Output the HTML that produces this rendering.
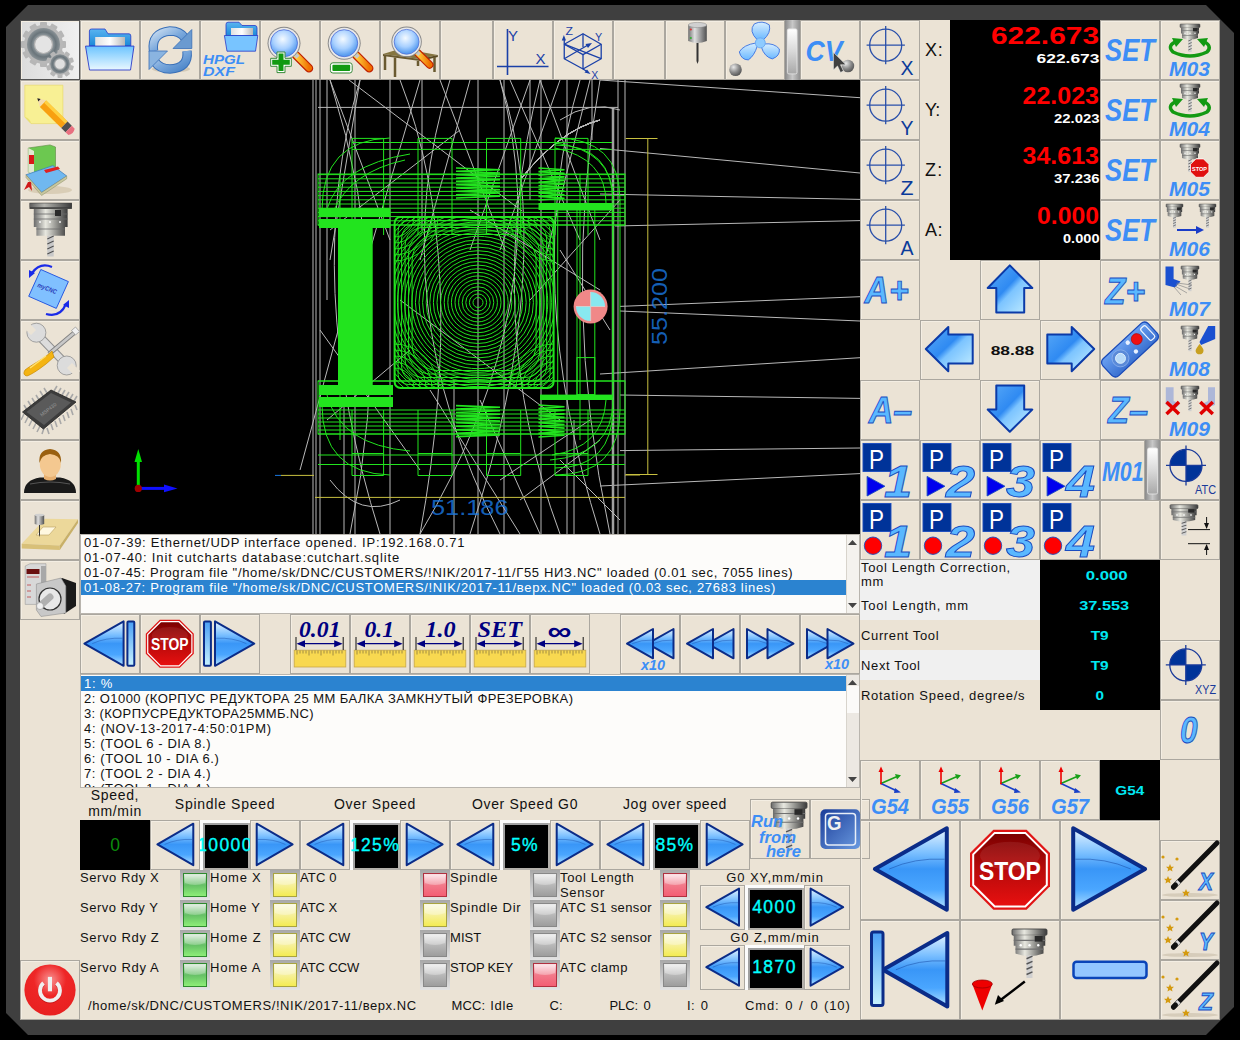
<!DOCTYPE html>
<html><head><meta charset="utf-8">
<style>
*{margin:0;padding:0;box-sizing:border-box}
html,body{width:1240px;height:1040px;overflow:hidden;background:#000}
body{position:relative;font-family:"Liberation Sans",sans-serif;color:#111}
.a{position:absolute}
#frame{left:6px;top:5px;width:1228px;height:1030px;background:#3f3f3f;
 clip-path:polygon(22px 0,1200px 0,1228px 28px,1228px 1002px,1200px 1030px,22px 1030px,0 1008px,0 22px)}
#win{left:20px;top:20px;width:1200px;height:1000px;background:#ebe3d5}
.b{position:absolute;border:1px solid #aba79f;box-shadow:inset 1px 1px 0 #f4eee3}
.blk{position:absolute;background:#000}
.lst{position:absolute;background:#fdfcfa;border:1px solid #b9b5ae;overflow:hidden}
.row{position:absolute;left:0;height:15px;font-size:13px;line-height:15px;white-space:nowrap;padding-left:3px}
.sel{background:#2b83d0;color:#fff}
.t{position:absolute;white-space:nowrap;font-size:13px;line-height:15px}
.ctr{text-align:center}
svg.ov{position:absolute;left:0;top:0}
.vbox{width:50px;height:50px;background:#000;box-shadow:inset 3px 3px 0 #fcfcfc,inset -2px -2px 0 #b4b0aa,inset 5px 5px 0 #a0a0a0;color:#00ffff;font-size:17.5px;-webkit-text-stroke:0.35px #00ffff;overflow:hidden;display:flex;align-items:center;justify-content:center}
.vbox2{width:59px;height:45px;background:#000;box-shadow:inset 3px 3px 0 #fcfcfc,inset -2px -2px 0 #b4b0aa,inset 5px 5px 0 #a0a0a0;color:#00ffff;font-size:17.5px;-webkit-text-stroke:0.35px #00ffff;overflow:hidden;display:flex;align-items:center;justify-content:center}
.dro{left:950px;width:149px;text-align:right;color:#ff0000;font-weight:bold;font-size:24px;line-height:26px}
.dro2{left:950px;width:149px;text-align:right;color:#fff;font-weight:bold;font-size:13px;line-height:14px}
.tv{left:1040px;width:120px;text-align:center;color:#00e5f0;font-weight:bold;font-size:13px;line-height:15px}
</style></head><body>
<div id="frame" class="a"></div>
<div id="win" class="a"></div>

<!-- top toolbar -->
<div class="b" style="left:20px;top:20px;width:60px;height:60px;background:linear-gradient(90deg,#dcdcdc,#f0f0f0);border-color:#555"></div>
<div class="b" style="left:80px;top:20px;width:60px;height:60px"></div>
<div class="b" style="left:140px;top:20px;width:60px;height:60px"></div>
<div class="b" style="left:200px;top:20px;width:60px;height:60px"></div>
<div class="b" style="left:260px;top:20px;width:60px;height:60px"></div>
<div class="b" style="left:320px;top:20px;width:60px;height:60px"></div>
<div class="b" style="left:380px;top:20px;width:60px;height:60px"></div>
<div class="b" style="left:440px;top:20px;width:53px;height:60px"></div>
<div class="b" style="left:493px;top:20px;width:60px;height:60px"></div>
<div class="b" style="left:553px;top:20px;width:60px;height:60px"></div>
<div class="b" style="left:613px;top:20px;width:52px;height:60px"></div>
<div class="b" style="left:665px;top:20px;width:60px;height:60px"></div>
<div class="b" style="left:725px;top:20px;width:60px;height:60px"></div>
<div class="b" style="left:800px;top:20px;width:60px;height:60px"></div>

<!-- left column -->
<div class="b" style="left:20px;top:80px;width:60px;height:60px"></div>
<div class="b" style="left:20px;top:140px;width:60px;height:60px"></div>
<div class="b" style="left:20px;top:200px;width:60px;height:60px"></div>
<div class="b" style="left:20px;top:260px;width:60px;height:60px"></div>
<div class="b" style="left:20px;top:320px;width:60px;height:60px"></div>
<div class="b" style="left:20px;top:380px;width:60px;height:60px"></div>
<div class="b" style="left:20px;top:440px;width:60px;height:60px"></div>
<div class="b" style="left:20px;top:500px;width:60px;height:60px"></div>
<div class="b" style="left:20px;top:560px;width:60px;height:60px"></div>
<div class="b" style="left:20px;top:960px;width:60px;height:60px"></div>

<!-- canvas -->
<div class="blk" style="left:80px;top:80px;width:780px;height:454px"></div>

<svg class="ov" style="left:80px;top:80px" width="780" height="454" viewBox="80 80 780 454"><path d="M600.0 80.0L860.0 97.7" stroke="#b8b8b8" stroke-width="1"></path>
<path d="M600.0 148.5L860.0 173.0" stroke="#b8b8b8" stroke-width="1"></path>
<path d="M600.0 194.0L860.0 199.4" stroke="#b8b8b8" stroke-width="1"></path>
<path d="M615.0 226.0L860.0 220.6" stroke="#b8b8b8" stroke-width="1"></path>
<path d="M620.0 306.4L860.0 296.7" stroke="#b8b8b8" stroke-width="1"></path>
<path d="M620.0 311.0L860.0 321.0" stroke="#b8b8b8" stroke-width="1"></path>
<path d="M600.0 374.0L860.0 357.7" stroke="#b8b8b8" stroke-width="1"></path>
<path d="M620.0 395.0L860.0 398.4" stroke="#b8b8b8" stroke-width="1"></path>
<path d="M620.0 450.6L860.0 448.0" stroke="#b8b8b8" stroke-width="1"></path>
<path d="M600.0 486.0L860.0 473.6" stroke="#b8b8b8" stroke-width="1"></path>
<path d="M313.0 80.0L313.0 534.0" stroke="#b8b8b8" stroke-width="1"></path>
<path d="M316.0 80.0L316.0 534.0" stroke="#b8b8b8" stroke-width="1"></path>
<path d="M320.0 80.0L320.0 534.0" stroke="#b8b8b8" stroke-width="1"></path>
<path d="M355.0 80.0L355.0 534.0" stroke="#b8b8b8" stroke-width="1"></path>
<path d="M390.0 80.0L390.0 534.0" stroke="#b8b8b8" stroke-width="1"></path>
<path d="M478.0 80.0L478.0 534.0" stroke="#b8b8b8" stroke-width="1"></path>
<path d="M504.0 80.0L504.0 534.0" stroke="#b8b8b8" stroke-width="1"></path>
<path d="M541.0 80.0L541.0 534.0" stroke="#b8b8b8" stroke-width="1"></path>
<path d="M567.0 80.0L567.0 534.0" stroke="#b8b8b8" stroke-width="1"></path>
<path d="M618.0 80.0L618.0 534.0" stroke="#b8b8b8" stroke-width="1"></path>
<path d="M625.0 80.0L625.0 534.0" stroke="#b8b8b8" stroke-width="1"></path>
<path d="M327.0 80.0L327.0 300.0" stroke="#b8b8b8" stroke-width="1"></path>
<path d="M344.0 400.0L344.0 534.0" stroke="#b8b8b8" stroke-width="1"></path>
<path d="M422.0 80.0L422.0 230.0" stroke="#b8b8b8" stroke-width="1"></path>
<path d="M454.0 380.0L454.0 534.0" stroke="#b8b8b8" stroke-width="1"></path>
<path d="M530.0 80.0L530.0 200.0" stroke="#b8b8b8" stroke-width="1"></path>
<path d="M574.0 420.0L574.0 534.0" stroke="#b8b8b8" stroke-width="1"></path>
<path d="M592.0 80.0L592.0 140.0" stroke="#b8b8b8" stroke-width="1"></path>
<path d="M318.0 107.4L618.0 107.4" stroke="#b8b8b8" stroke-width="1"></path>
<path d="M613.0 107.0L613.0 534.0" stroke="#a0a0a0" stroke-width="2.5"></path>
<path d="M349.0 80.0L522.0 211.0" stroke="#b8b8b8" stroke-width="1"></path>
<path d="M330.0 80.0L390.0 240.0" stroke="#b8b8b8" stroke-width="1"></path>
<path d="M360.0 80.0L330.0 260.0" stroke="#b8b8b8" stroke-width="1"></path>
<path d="M420.0 80.0L370.0 250.0" stroke="#b8b8b8" stroke-width="1"></path>
<path d="M440.0 80.0L505.0 250.0" stroke="#b8b8b8" stroke-width="1"></path>
<path d="M470.0 80.0L420.0 260.0" stroke="#b8b8b8" stroke-width="1"></path>
<path d="M530.0 80.0L470.0 250.0" stroke="#b8b8b8" stroke-width="1"></path>
<path d="M510.0 80.0L580.0 240.0" stroke="#b8b8b8" stroke-width="1"></path>
<path d="M560.0 80.0L500.0 250.0" stroke="#b8b8b8" stroke-width="1"></path>
<path d="M590.0 80.0L545.0 260.0" stroke="#b8b8b8" stroke-width="1"></path>
<path d="M540.0 80.0L600.0 240.0" stroke="#b8b8b8" stroke-width="1"></path>
<path d="M330.0 230.0L460.0 130.0" stroke="#b8b8b8" stroke-width="1"></path>
<path d="M360.0 250.0L300.0 470.0" stroke="#b8b8b8" stroke-width="1"></path>
<path d="M327.0 420.0L410.0 350.0" stroke="#b8b8b8" stroke-width="1"></path>
<path d="M400.0 300.0L560.0 420.0" stroke="#b8b8b8" stroke-width="1"></path>
<path d="M560.0 250.0L610.0 330.0" stroke="#b8b8b8" stroke-width="1"></path>
<path d="M470.0 210.0L600.0 290.0" stroke="#b8b8b8" stroke-width="1"></path>
<path d="M320.0 330.0L420.0 470.0" stroke="#b8b8b8" stroke-width="1"></path>
<path d="M430.0 390.0L520.0 534.0" stroke="#b8b8b8" stroke-width="1"></path>
<path d="M480.0 400.0L540.0 534.0" stroke="#b8b8b8" stroke-width="1"></path>
<path d="M500.0 480.0L590.0 420.0" stroke="#b8b8b8" stroke-width="1"></path>
<path d="M560.0 460.0L620.0 520.0" stroke="#b8b8b8" stroke-width="1"></path>
<path d="M600.0 440.0L520.0 500.0" stroke="#b8b8b8" stroke-width="1"></path>
<path d="M620.0 200.0L530.0 300.0" stroke="#b8b8b8" stroke-width="1"></path>
<path d="M560 120Q590 100 620 110" fill="none" stroke="#b8b8b8" stroke-width="1"></path>
<path d="M330 80 Q400 300 350 534" fill="none" stroke="#b8b8b8" stroke-width="1"></path>
<path d="M520 180Q560 130 600 120" fill="none" stroke="#b8b8b8" stroke-width="1"></path>
<path d="M360 80 Q300 280 380 534" fill="none" stroke="#b8b8b8" stroke-width="1"></path>
<path d="M520 180Q560 130 600 120" fill="none" stroke="#b8b8b8" stroke-width="1"></path>
<path d="M400 80 Q470 260 420 534" fill="none" stroke="#b8b8b8" stroke-width="1"></path>
<path d="M520 180Q560 130 600 120" fill="none" stroke="#b8b8b8" stroke-width="1"></path>
<path d="M450 80 Q380 300 500 534" fill="none" stroke="#b8b8b8" stroke-width="1"></path>
<path d="M520 180Q560 130 600 120" fill="none" stroke="#b8b8b8" stroke-width="1"></path>
<path d="M500 80 Q560 260 470 534" fill="none" stroke="#b8b8b8" stroke-width="1"></path>
<path d="M520 180Q560 130 600 120" fill="none" stroke="#b8b8b8" stroke-width="1"></path>
<path d="M540 80 Q480 320 560 534" fill="none" stroke="#b8b8b8" stroke-width="1"></path>
<path d="M520 180Q560 130 600 120" fill="none" stroke="#b8b8b8" stroke-width="1"></path>
<path d="M580 80 Q520 280 600 534" fill="none" stroke="#b8b8b8" stroke-width="1"></path>
<path d="M520 180Q560 130 600 120" fill="none" stroke="#b8b8b8" stroke-width="1"></path>
<path d="M600 80 Q560 300 610 534" fill="none" stroke="#b8b8b8" stroke-width="1"></path>
<path d="M520 180Q560 130 600 120" fill="none" stroke="#b8b8b8" stroke-width="1"></path>
<path d="M420 534 Q560 300 500 80" fill="none" stroke="#b8b8b8" stroke-width="1"></path>
<path d="M520 180Q560 130 600 120" fill="none" stroke="#b8b8b8" stroke-width="1"></path>
<path d="M330 480Q360 520 400 500" fill="none" stroke="#b8b8b8" stroke-width="1"></path>
<path d="M352.0 142.5L612.0 142.5" stroke="#22e41e" stroke-width="1"></path>
<path d="M352.0 149.4L612.0 149.4" stroke="#22e41e" stroke-width="1"></path>
<path d="M318.0 174.6L625.0 174.6" stroke="#22e41e" stroke-width="1"></path>
<path d="M318.0 178.8L625.0 178.8" stroke="#22e41e" stroke-width="1"></path>
<path d="M318.0 183.0L625.0 183.0" stroke="#22e41e" stroke-width="1"></path>
<path d="M318.0 187.2L625.0 187.2" stroke="#22e41e" stroke-width="1"></path>
<path d="M318.0 191.4L625.0 191.4" stroke="#22e41e" stroke-width="1"></path>
<path d="M318.0 195.6L625.0 195.6" stroke="#22e41e" stroke-width="1"></path>
<path d="M318.0 199.8L625.0 199.8" stroke="#22e41e" stroke-width="1"></path>
<path d="M318.0 204.0L625.0 204.0" stroke="#22e41e" stroke-width="1"></path>
<path d="M318.0 208.2L625.0 208.2" stroke="#22e41e" stroke-width="1"></path>
<path d="M318.0 212.4L625.0 212.4" stroke="#22e41e" stroke-width="1"></path>
<path d="M318.0 216.6L625.0 216.6" stroke="#22e41e" stroke-width="1"></path>
<path d="M318.0 220.8L625.0 220.8" stroke="#22e41e" stroke-width="1"></path>
<path d="M318.0 225.0L625.0 225.0" stroke="#22e41e" stroke-width="1"></path>
<path d="M318.0 381.0L625.0 381.0" stroke="#22e41e" stroke-width="1"></path>
<path d="M318.0 410.0L625.0 410.0" stroke="#22e41e" stroke-width="1"></path>
<path d="M318.0 414.0L625.0 414.0" stroke="#22e41e" stroke-width="1"></path>
<path d="M318.0 418.0L625.0 418.0" stroke="#22e41e" stroke-width="1"></path>
<path d="M318.0 422.0L625.0 422.0" stroke="#22e41e" stroke-width="1"></path>
<path d="M318.0 426.0L625.0 426.0" stroke="#22e41e" stroke-width="1"></path>
<path d="M318.0 430.0L625.0 430.0" stroke="#22e41e" stroke-width="1"></path>
<path d="M318.0 434.0L625.0 434.0" stroke="#22e41e" stroke-width="1"></path>
<path d="M318.0 455.0L625.0 455.0" stroke="#22e41e" stroke-width="1"></path>
<path d="M318.0 464.5L625.0 464.5" stroke="#22e41e" stroke-width="1"></path>
<path d="M352.0 138.4L352.0 235.0" stroke="#22e41e" stroke-width="1"></path>
<path d="M352.0 410.0L352.0 475.5" stroke="#22e41e" stroke-width="1"></path>
<path d="M383.6 138.4L383.6 235.0" stroke="#22e41e" stroke-width="1"></path>
<path d="M383.6 410.0L383.6 475.5" stroke="#22e41e" stroke-width="1"></path>
<path d="M418.0 138.4L418.0 235.0" stroke="#22e41e" stroke-width="1"></path>
<path d="M418.0 410.0L418.0 475.5" stroke="#22e41e" stroke-width="1"></path>
<path d="M452.0 138.4L452.0 235.0" stroke="#22e41e" stroke-width="1"></path>
<path d="M452.0 410.0L452.0 475.5" stroke="#22e41e" stroke-width="1"></path>
<path d="M486.5 138.4L486.5 235.0" stroke="#22e41e" stroke-width="1"></path>
<path d="M486.5 410.0L486.5 475.5" stroke="#22e41e" stroke-width="1"></path>
<path d="M520.7 138.4L520.7 235.0" stroke="#22e41e" stroke-width="1"></path>
<path d="M520.7 410.0L520.7 475.5" stroke="#22e41e" stroke-width="1"></path>
<path d="M555.0 138.4L555.0 235.0" stroke="#22e41e" stroke-width="1"></path>
<path d="M555.0 410.0L555.0 475.5" stroke="#22e41e" stroke-width="1"></path>
<path d="M588.0 138.4L588.0 235.0" stroke="#22e41e" stroke-width="1"></path>
<path d="M588.0 410.0L588.0 475.5" stroke="#22e41e" stroke-width="1"></path>
<path d="M352.0 138.4L383.6 138.4" stroke="#22e41e" stroke-width="1"></path>
<path d="M352.0 475.5L383.6 475.5" stroke="#22e41e" stroke-width="1"></path>
<path d="M352.0 453.5L383.6 453.5" stroke="#22e41e" stroke-width="1"></path>
<path d="M418.0 138.4L452.0 138.4" stroke="#22e41e" stroke-width="1"></path>
<path d="M418.0 475.5L452.0 475.5" stroke="#22e41e" stroke-width="1"></path>
<path d="M418.0 453.5L452.0 453.5" stroke="#22e41e" stroke-width="1"></path>
<path d="M486.5 138.4L520.7 138.4" stroke="#22e41e" stroke-width="1"></path>
<path d="M486.5 475.5L520.7 475.5" stroke="#22e41e" stroke-width="1"></path>
<path d="M486.5 453.5L520.7 453.5" stroke="#22e41e" stroke-width="1"></path>
<path d="M555.0 138.4L588.0 138.4" stroke="#22e41e" stroke-width="1"></path>
<path d="M555.0 475.5L588.0 475.5" stroke="#22e41e" stroke-width="1"></path>
<path d="M555.0 453.5L588.0 453.5" stroke="#22e41e" stroke-width="1"></path>
<rect x="318.0" y="174.0" width="307.0" height="51.0" rx="0.0" fill="none" stroke="#22e41e" stroke-width="1"></rect>
<rect x="318.0" y="381.0" width="307.0" height="53.0" rx="0.0" fill="none" stroke="#22e41e" stroke-width="1"></rect>
<path d="M340.0 174.0L340.0 440.0" stroke="#22e41e" stroke-width="1"></path>
<path d="M580.0 174.0L580.0 440.0" stroke="#22e41e" stroke-width="1"></path>
<path d="M327 209Q340 165 410 154" fill="none" stroke="#22e41e" stroke-width="1"></path>
<path d="M333 212Q350 172 405 160" fill="none" stroke="#22e41e" stroke-width="1"></path>
<path d="M555 143Q613 150 613 200" fill="none" stroke="#22e41e" stroke-width="1"></path>
<path d="M555 148Q606 158 606 203" fill="none" stroke="#22e41e" stroke-width="1"></path>
<path d="M327 395Q340 445 410 451" fill="none" stroke="#22e41e" stroke-width="1"></path>
<path d="M613 400Q613 455 550 460" fill="none" stroke="#22e41e" stroke-width="1"></path>
<path d="M606 400Q603 448 552 455" fill="none" stroke="#22e41e" stroke-width="1"></path>
<path d="M555 138Q620 138 620 200V410Q620 475 555 475" fill="none" stroke="#22e41e" stroke-width="1"></path>
<path d="M555 145Q613 145 613 203V407Q613 468 555 468" fill="none" stroke="#22e41e" stroke-width="1"></path>
<path d="M390 138Q322 140 322 210" fill="none" stroke="#22e41e" stroke-width="1"></path>
<path d="M390 475Q322 473 322 405" fill="none" stroke="#22e41e" stroke-width="1"></path>
<rect x="319.0" y="208.0" width="71.5" height="9.0" fill="#22e41e"></rect>
<rect x="319.0" y="219.0" width="71.5" height="9.0" fill="#22e41e"></rect>
<rect x="338.0" y="228.0" width="34.7" height="157.0" fill="#22e41e"></rect>
<rect x="319.0" y="385.0" width="74.0" height="10.0" fill="#22e41e"></rect>
<rect x="319.0" y="397.0" width="74.0" height="10.0" fill="#22e41e"></rect>
<rect x="538.5" y="203.0" width="74.0" height="7.0" fill="#22e41e"></rect>
<rect x="540.0" y="394.6" width="72.6" height="5.4" fill="#22e41e"></rect>
<rect x="557.7" y="210.0" width="55.0" height="187.0" rx="0.0" fill="none" stroke="#22e41e" stroke-width="1"></rect>
<path d="M577.0 210.0L577.0 395.0" stroke="#22e41e" stroke-width="1"></path>
<path d="M594.8 210.0L594.8 395.0" stroke="#22e41e" stroke-width="1"></path>
<rect x="577.0" y="357.6" width="17.8" height="37.0" rx="0.0" fill="none" stroke="#22e41e" stroke-width="1"></rect>
<path d="M456.0 168.0 L500.0 169.7 L456.0 171.3 L500.0 173.0 L456.0 174.7 L500.0 176.3 L456.0 178.0 L500.0 179.7 L456.0 181.3 L500.0 183.0 L456.0 184.7 L500.0 186.3 L456.0 188.0 L500.0 189.7 L456.0 191.3 L500.0 193.0 L456.0 194.7 L500.0 196.3 L456.0 198.0" fill="none" stroke="#22e41e" stroke-width="1.6"></path>
<path d="M538.5 168.0 L564.5 169.8 L538.5 171.6 L564.5 173.3 L538.5 175.1 L564.5 176.9 L538.5 178.7 L564.5 180.4 L538.5 182.2 L564.5 184.0 L538.5 185.8 L564.5 187.6 L538.5 189.3 L564.5 191.1 L538.5 192.9 L564.5 194.7 L538.5 196.4 L564.5 198.2 L538.5 200.0" fill="none" stroke="#22e41e" stroke-width="1.6"></path>
<path d="M456.0 405.6 L500.0 407.3 L456.0 409.0 L500.0 410.8 L456.0 412.5 L500.0 414.2 L456.0 415.9 L500.0 417.7 L456.0 419.4 L500.0 421.1 L456.0 422.8 L500.0 424.5 L456.0 426.3 L500.0 428.0 L456.0 429.7 L500.0 431.4 L456.0 433.2 L500.0 434.9 L456.0 436.6" fill="none" stroke="#22e41e" stroke-width="1.6"></path>
<path d="M538.5 405.0 L564.5 406.8 L538.5 408.6 L564.5 410.3 L538.5 412.1 L564.5 413.9 L538.5 415.7 L564.5 417.4 L538.5 419.2 L564.5 421.0 L538.5 422.8 L564.5 424.6 L538.5 426.3 L564.5 428.1 L538.5 429.9 L564.5 431.7 L538.5 433.4 L564.5 435.2 L538.5 437.0" fill="none" stroke="#22e41e" stroke-width="1.6"></path>
<clipPath id="csq"><rect x="394.6" y="217" width="159" height="171" rx="6"></rect></clipPath><g clip-path="url(#csq)">
<circle cx="478" cy="302.5" r="5.0" fill="none" stroke="#22e41e" stroke-width="1"></circle>
<circle cx="478" cy="302.5" r="8.6" fill="none" stroke="#22e41e" stroke-width="1"></circle>
<circle cx="478" cy="302.5" r="12.2" fill="none" stroke="#22e41e" stroke-width="1"></circle>
<circle cx="478" cy="302.5" r="15.8" fill="none" stroke="#22e41e" stroke-width="1"></circle>
<circle cx="478" cy="302.5" r="19.4" fill="none" stroke="#22e41e" stroke-width="1"></circle>
<circle cx="478" cy="302.5" r="23.0" fill="none" stroke="#22e41e" stroke-width="1"></circle>
<circle cx="478" cy="302.5" r="26.6" fill="none" stroke="#22e41e" stroke-width="1"></circle>
<circle cx="478" cy="302.5" r="30.2" fill="none" stroke="#22e41e" stroke-width="1"></circle>
<circle cx="478" cy="302.5" r="33.8" fill="none" stroke="#22e41e" stroke-width="1"></circle>
<circle cx="478" cy="302.5" r="37.4" fill="none" stroke="#22e41e" stroke-width="1"></circle>
<circle cx="478" cy="302.5" r="41.0" fill="none" stroke="#22e41e" stroke-width="1"></circle>
<circle cx="478" cy="302.5" r="44.6" fill="none" stroke="#22e41e" stroke-width="1"></circle>
<circle cx="478" cy="302.5" r="48.2" fill="none" stroke="#22e41e" stroke-width="1"></circle>
<circle cx="478" cy="302.5" r="51.8" fill="none" stroke="#22e41e" stroke-width="1"></circle>
<circle cx="478" cy="302.5" r="55.4" fill="none" stroke="#22e41e" stroke-width="1"></circle>
<circle cx="478" cy="302.5" r="59.0" fill="none" stroke="#22e41e" stroke-width="1"></circle>
<circle cx="478" cy="302.5" r="62.6" fill="none" stroke="#22e41e" stroke-width="1"></circle>
<circle cx="478" cy="302.5" r="66.2" fill="none" stroke="#22e41e" stroke-width="1"></circle>
<circle cx="478" cy="302.5" r="69.8" fill="none" stroke="#22e41e" stroke-width="1"></circle>
<circle cx="478" cy="302.5" r="73.4" fill="none" stroke="#22e41e" stroke-width="1"></circle>
<circle cx="478" cy="302.5" r="77.0" fill="none" stroke="#22e41e" stroke-width="1"></circle>
<circle cx="478" cy="302.5" r="80.6" fill="none" stroke="#22e41e" stroke-width="1"></circle>
<circle cx="478" cy="302.5" r="84.2" fill="none" stroke="#22e41e" stroke-width="1"></circle>
<circle cx="478" cy="302.5" r="87.8" fill="none" stroke="#22e41e" stroke-width="1"></circle>
<circle cx="478" cy="302.5" r="91.4" fill="none" stroke="#22e41e" stroke-width="1"></circle>
<circle cx="478" cy="302.5" r="95.0" fill="none" stroke="#22e41e" stroke-width="1"></circle>
<circle cx="478" cy="302.5" r="98.6" fill="none" stroke="#22e41e" stroke-width="1"></circle>
<circle cx="478" cy="302.5" r="102.2" fill="none" stroke="#22e41e" stroke-width="1"></circle>
<circle cx="478" cy="302.5" r="105.8" fill="none" stroke="#22e41e" stroke-width="1"></circle>
<circle cx="478" cy="302.5" r="109.4" fill="none" stroke="#22e41e" stroke-width="1"></circle>
<circle cx="478" cy="302.5" r="113.0" fill="none" stroke="#22e41e" stroke-width="1"></circle>
<circle cx="478" cy="302.5" r="116.6" fill="none" stroke="#22e41e" stroke-width="1"></circle>
<rect x="394.6" y="217.0" width="159.0" height="171.0" rx="6.0" fill="none" stroke="#22e41e" stroke-width="1"></rect>
<rect x="398.1" y="220.5" width="152.0" height="164.0" rx="10.0" fill="none" stroke="#22e41e" stroke-width="1"></rect>
<rect x="401.6" y="224.0" width="145.0" height="157.0" rx="14.0" fill="none" stroke="#22e41e" stroke-width="1"></rect>
<rect x="405.1" y="227.5" width="138.0" height="150.0" rx="18.0" fill="none" stroke="#22e41e" stroke-width="1"></rect>
<rect x="408.6" y="231.0" width="131.0" height="143.0" rx="22.0" fill="none" stroke="#22e41e" stroke-width="1"></rect>
<rect x="412.1" y="234.5" width="124.0" height="136.0" rx="26.0" fill="none" stroke="#22e41e" stroke-width="1"></rect>
<circle cx="394" cy="217" r="20" fill="none" stroke="#22e41e" stroke-width="0.9"></circle>
<circle cx="394" cy="217" r="26" fill="none" stroke="#22e41e" stroke-width="0.9"></circle>
<circle cx="394" cy="217" r="32" fill="none" stroke="#22e41e" stroke-width="0.9"></circle>
<circle cx="394" cy="217" r="38" fill="none" stroke="#22e41e" stroke-width="0.9"></circle>
<circle cx="394" cy="217" r="44" fill="none" stroke="#22e41e" stroke-width="0.9"></circle>
<circle cx="554" cy="217" r="20" fill="none" stroke="#22e41e" stroke-width="0.9"></circle>
<circle cx="554" cy="217" r="26" fill="none" stroke="#22e41e" stroke-width="0.9"></circle>
<circle cx="554" cy="217" r="32" fill="none" stroke="#22e41e" stroke-width="0.9"></circle>
<circle cx="554" cy="217" r="38" fill="none" stroke="#22e41e" stroke-width="0.9"></circle>
<circle cx="554" cy="217" r="44" fill="none" stroke="#22e41e" stroke-width="0.9"></circle>
<circle cx="394" cy="388" r="20" fill="none" stroke="#22e41e" stroke-width="0.9"></circle>
<circle cx="394" cy="388" r="26" fill="none" stroke="#22e41e" stroke-width="0.9"></circle>
<circle cx="394" cy="388" r="32" fill="none" stroke="#22e41e" stroke-width="0.9"></circle>
<circle cx="394" cy="388" r="38" fill="none" stroke="#22e41e" stroke-width="0.9"></circle>
<circle cx="394" cy="388" r="44" fill="none" stroke="#22e41e" stroke-width="0.9"></circle>
<circle cx="554" cy="388" r="20" fill="none" stroke="#22e41e" stroke-width="0.9"></circle>
<circle cx="554" cy="388" r="26" fill="none" stroke="#22e41e" stroke-width="0.9"></circle>
<circle cx="554" cy="388" r="32" fill="none" stroke="#22e41e" stroke-width="0.9"></circle>
<circle cx="554" cy="388" r="38" fill="none" stroke="#22e41e" stroke-width="0.9"></circle>
<circle cx="554" cy="388" r="44" fill="none" stroke="#22e41e" stroke-width="0.9"></circle>
</g>
<rect x="394.6" y="217.0" width="159.0" height="171.0" rx="6.0" fill="none" stroke="#22e41e" stroke-width="2"></rect>
<path d="M625.7 138.5L657.5 138.5" stroke="#c8c040" stroke-width="1"></path>
<path d="M625.7 474.5L657.5 474.5" stroke="#c8c040" stroke-width="1"></path>
<path d="M647.8 138.5L647.8 474.5" stroke="#c8c040" stroke-width="1"></path>
<path d="M315.0 497.4L625.0 497.4" stroke="#c8c040" stroke-width="1"></path>
<path d="M281.0 475.4L314.0 475.4" stroke="#c8c040" stroke-width="1"></path>
<path d="M275.0 475.4L281.0 475.4" stroke="#1a78e0" stroke-width="1"></path>
<path d="M625.0 475.0L640.0 475.0" stroke="#c8c040" stroke-width="1"></path>
<text x="431" y="515.2" font-family="Liberation Sans" font-size="22" fill="#1a7ae6" fill-opacity="0.8" textLength="77.5" lengthAdjust="spacingAndGlyphs">51.186</text>
<text transform="translate(666.5,345) rotate(-90)" x="0" y="0" font-family="Liberation Sans" font-size="22" fill="#1a7ae6" fill-opacity="0.8" textLength="77" lengthAdjust="spacingAndGlyphs">55.200</text>
<circle cx="590.6" cy="306.5" r="17" fill="#f08888"></circle>
<path d="M590.6 306.5V292A14.5 14.5 0 0 1 605 306.5Z M590.6 306.5H576A14.5 14.5 0 0 0 590.6 321Z" fill="#88e8f0"></path>
<path d="M576 306.5H605M590.6 292V321" stroke="#d0d0d0" stroke-width="1"></path>
<path d="M138.3 488.4V458" stroke="#00e000" stroke-width="3"></path><path d="M138.3 449L134.5 462H142Z" fill="#00e000"></path>
<path d="M138.3 488.4H168" stroke="#1010ff" stroke-width="3"></path><path d="M177.5 488.4L164 484.5V492.3Z" fill="#1010ff"></path>
<circle cx="138.3" cy="488.4" r="3.6" fill="#a00000"></circle></svg>
<!-- log -->
<div class="lst" style="left:80px;top:534px;width:780px;height:80px">
 <div class="row" style="top: 0px; letter-spacing: 0.76px;">01-07-39: Ethernet/UDP interface opened. IP:192.168.0.71</div>
 <div class="row" style="top: 15px; letter-spacing: 0.86px;">01-07-40: Init cutcharts database:cutchart.sqlite</div>
 <div class="row" style="top: 30px; letter-spacing: 0.68px;">01-07-45: Program file "/home/sk/DNC/CUSTOMERS/!NIK/2017-11/Г55 НИЗ.NC" loaded (0.01 sec, 7055 lines)</div>
 <div class="row sel" style="top: 45px; width: 765px; letter-spacing: 0.69px;">01-08-27: Program file "/home/sk/DNC/CUSTOMERS/!NIK/2017-11/верх.NC" loaded (0.03 sec, 27683 lines)</div>
</div>

<!-- transport row -->
<div class="b" style="left:80px;top:614px;width:60px;height:60px"></div>
<div class="b" style="left:140px;top:614px;width:60px;height:60px"></div>
<div class="b" style="left:200px;top:614px;width:60px;height:60px"></div>
<div class="b" style="left:290px;top:614px;width:60px;height:60px"></div>
<div class="b" style="left:350px;top:614px;width:60px;height:60px"></div>
<div class="b" style="left:410px;top:614px;width:60px;height:60px"></div>
<div class="b" style="left:470px;top:614px;width:60px;height:60px"></div>
<div class="b" style="left:530px;top:614px;width:60px;height:60px"></div>
<div class="b" style="left:620px;top:614px;width:60px;height:60px"></div>
<div class="b" style="left:680px;top:614px;width:60px;height:60px"></div>
<div class="b" style="left:740px;top:614px;width:60px;height:60px"></div>
<div class="b" style="left:800px;top:614px;width:60px;height:60px"></div>

<!-- gcode list -->
<div class="lst" style="left:80px;top:674px;width:780px;height:114px">
 <div class="row sel" style="top: 1px; width: 765px; letter-spacing: 0.78px;">1: %</div>
 <div class="row" style="top: 16px; letter-spacing: 0.44px;">2: O1000 (КОРПУС РЕДУКТОРА 25 ММ БАЛКА ЗАМКНУТЫЙ ФРЕЗЕРОВКА)</div>
 <div class="row" style="top: 31px; letter-spacing: 0.38px;">3: (КОРПУСРЕДУКТОРА25ММБ.NC)</div>
 <div class="row" style="top: 46px; letter-spacing: 0.69px;">4: (NOV-13-2017-4:50:01PM)</div>
 <div class="row" style="top: 61px; letter-spacing: 0.58px;">5: (TOOL 6 - DIA 8.)</div>
 <div class="row" style="top: 76px; letter-spacing: 0.6px;">6: (TOOL 10 - DIA 6.)</div>
 <div class="row" style="top: 91px; letter-spacing: 0.58px;">7: (TOOL 2 - DIA 4.)</div>
 <div class="row" style="top: 106px; letter-spacing: 0.58px;">8: (TOOL 1 - DIA 4.)</div>
</div>


<!-- speed labels -->
<div class="t ctr" style="left: 80px; top: 788px; width: 70px; line-height: 15.5px; font-size: 14px; letter-spacing: 0.66px;">Speed,<br>mm/min</div>
<div class="t ctr" style="left: 150px; top: 796px; width: 150px; font-size: 14px; line-height: 16px; letter-spacing: 0.71px;">Spindle Speed</div>
<div class="t ctr" style="left: 300px; top: 796px; width: 150px; font-size: 14px; line-height: 16px; letter-spacing: 0.73px;">Over Speed</div>
<div class="t ctr" style="left: 450px; top: 796px; width: 150px; font-size: 14px; line-height: 16px; letter-spacing: 0.69px;">Over Speed G0</div>
<div class="t ctr" style="left: 600px; top: 796px; width: 150px; font-size: 14px; line-height: 16px; letter-spacing: 0.59px;">Jog over speed</div>
<div class="blk" style="left:80px;top:820px;width:70px;height:50px"></div>
<div class="t ctr" style="left:80px;top:834px;width:70px;font-size:17.5px;line-height:22px;color:#0c8c0c">0</div>

<div class="b" style="left:150px;top:820px;width:50px;height:50px"></div>
<div class="b" style="left:250px;top:820px;width:50px;height:50px"></div>
<div class="b" style="left:300px;top:820px;width:50px;height:50px"></div>
<div class="b" style="left:400px;top:820px;width:50px;height:50px"></div>
<div class="b" style="left:450px;top:820px;width:50px;height:50px"></div>
<div class="b" style="left:550px;top:820px;width:50px;height:50px"></div>
<div class="b" style="left:600px;top:820px;width:50px;height:50px"></div>
<div class="b" style="left:700px;top:820px;width:50px;height:50px"></div>
<div class="vbox a" style="left:200px;top:820px"><span style="letter-spacing: 1.4px;">10000</span></div>
<div class="vbox a" style="left:350px;top:820px"><span style="letter-spacing: 1.32px;">125%</span></div>
<div class="vbox a" style="left:500px;top:820px"><span style="letter-spacing: 1.23px;">5%</span></div>
<div class="vbox a" style="left:650px;top:820px"><span style="letter-spacing: 1.29px;">85%</span></div>
<div class="b" style="left:750px;top:799px;width:60px;height:60px"></div>
<div class="b" style="left:810px;top:799px;width:60px;height:60px"></div>

<!-- LEDs labels -->
<div class="t" style="left: 80px; top: 870px; letter-spacing: 0.58px;">Servo Rdy X</div>
<div class="t" style="left: 80px; top: 900px; letter-spacing: 0.52px;">Servo Rdy Y</div>
<div class="t" style="left: 80px; top: 930px; letter-spacing: 0.65px;">Servo Rdy Z</div>
<div class="t" style="left: 80px; top: 960px; letter-spacing: 0.65px;">Servo Rdy A</div>
<div class="t" style="left: 210px; top: 870px; letter-spacing: 0.74px;">Home X</div>
<div class="t" style="left: 210px; top: 900px; letter-spacing: 0.62px;">Home Y</div>
<div class="t" style="left: 210px; top: 930px; letter-spacing: 0.87px;">Home Z</div>
<div class="t" style="left: 210px; top: 960px; letter-spacing: 0.86px;">Home A</div>
<div class="t" style="left: 300px; top: 870px; letter-spacing: 0.13px;">ATC 0</div>
<div class="t" style="left: 300px; top: 900px; letter-spacing: -0.03px;">ATC X</div>
<div class="t" style="left: 300px; top: 930px; letter-spacing: -0.02px;">ATC CW</div>
<div class="t" style="left: 300px; top: 960px; letter-spacing: -0.06px;">ATC CCW</div>
<div class="t" style="left: 450px; top: 870px; letter-spacing: 0.69px;">Spindle</div>
<div class="t" style="left: 450px; top: 900px; letter-spacing: 0.7px;">Spindle Dir</div>
<div class="t" style="left: 450px; top: 930px; letter-spacing: 0.05px;">MIST</div>
<div class="t" style="left: 450px; top: 960px; letter-spacing: -0.19px;">STOP KEY</div>
<div class="t" style="left: 560px; top: 870px; letter-spacing: 0.64px;">Tool Length<br>Sensor</div>
<div class="t" style="left: 560px; top: 900px; letter-spacing: 0.37px;">ATC S1 sensor</div>
<div class="t" style="left: 560px; top: 930px; letter-spacing: 0.37px;">ATC S2 sensor</div>
<div class="t" style="left: 560px; top: 960px; letter-spacing: 0.51px;">ATC clamp</div>

<div class="t ctr" style="left: 700px; top: 870px; width: 150px; letter-spacing: 0.94px;">G0 XY,mm/min</div>
<div class="t ctr" style="left: 700px; top: 930px; width: 150px; letter-spacing: 1px;">G0 Z,mm/min</div>
<div class="b" style="left:700px;top:885px;width:45px;height:45px"></div>
<div class="b" style="left:804px;top:885px;width:46px;height:45px"></div>
<div class="b" style="left:700px;top:945px;width:45px;height:45px"></div>
<div class="b" style="left:804px;top:945px;width:46px;height:45px"></div>
<div class="vbox2 a" style="left:745px;top:885px"><span style="letter-spacing: 1.4px;">4000</span></div>
<div class="vbox2 a" style="left:745px;top:945px"><span style="letter-spacing: 1.4px;">1870</span></div>

<!-- status bar -->
<div class="t" style="left: 88px; top: 998px; letter-spacing: 0.58px;">/home/sk/DNC/CUSTOMERS/!NIK/2017-11/верх.NC</div>
<div class="t" style="left: 451.5px; top: 998px; letter-spacing: 0.14px;">MCC:</div>
<div class="t" style="left: 490.2px; top: 998px; letter-spacing: 0.68px;">Idle</div>
<div class="t" style="left: 549.5px; top: 998px; letter-spacing: 0.23px;">C:</div>
<div class="t" style="left: 609.5px; top: 998px; letter-spacing: -0.09px;">PLC:</div>
<div class="t" style="left:643.4px;top:998px">0</div>
<div class="t" style="left: 686.9px; top: 998px; letter-spacing: 0.49px;">I:</div>
<div class="t" style="left:700.8px;top:998px">0</div>
<div class="t" style="left: 745px; top: 998px; letter-spacing: 0.83px;">Cmd:</div>
<div class="t" style="left:785.2px;top:998px">0</div>
<div class="t" style="left:798.9px;top:998px">/</div>
<div class="t" style="left:810.5px;top:998px">0</div>
<div class="t" style="left: 824px; top: 998px; letter-spacing: 0.89px;">(10)</div>

<!-- right panel: DRO -->
<div class="b" style="left:860px;top:20px;width:60px;height:60px"></div>
<div class="b" style="left:860px;top:80px;width:60px;height:60px"></div>
<div class="b" style="left:860px;top:140px;width:60px;height:60px"></div>
<div class="b" style="left:860px;top:200px;width:60px;height:60px"></div>
<div class="t" style="left: 925px; top: 40px; font-size: 18px; line-height: 20px; letter-spacing: 0.7px;">X:</div>
<div class="t" style="left: 925px; top: 100px; font-size: 18px; line-height: 20px; letter-spacing: -0.67px;">Y:</div>
<div class="t" style="left: 925px; top: 160px; font-size: 18px; line-height: 20px; letter-spacing: 1.2px;">Z:</div>
<div class="t" style="left: 925px; top: 220px; font-size: 18px; line-height: 20px; letter-spacing: 0.52px;">A:</div>
<div class="blk" style="left:950px;top:20px;width:150px;height:240px"></div>
<div class="b" style="left:1100px;top:20px;width:60px;height:60px"></div>
<div class="b" style="left:1100px;top:80px;width:60px;height:60px"></div>
<div class="b" style="left:1100px;top:140px;width:60px;height:60px"></div>
<div class="b" style="left:1100px;top:200px;width:60px;height:60px"></div>
<div class="b" style="left:1160px;top:20px;width:60px;height:60px"></div>
<div class="b" style="left:1160px;top:80px;width:60px;height:60px"></div>
<div class="b" style="left:1160px;top:140px;width:60px;height:60px"></div>
<div class="b" style="left:1160px;top:200px;width:60px;height:60px"></div>
<div class="b" style="left:1160px;top:260px;width:60px;height:60px"></div>
<div class="b" style="left:1160px;top:320px;width:60px;height:60px"></div>
<div class="b" style="left:1160px;top:380px;width:60px;height:60px"></div>
<!-- jog grid -->
<div class="b" style="left:860px;top:260px;width:60px;height:60px"></div>
<div class="b" style="left:980px;top:260px;width:60px;height:60px"></div>
<div class="b" style="left:1100px;top:260px;width:60px;height:60px"></div>
<div class="b" style="left:920px;top:320px;width:60px;height:60px"></div>
<div class="b" style="left:1040px;top:320px;width:60px;height:60px"></div>
<div class="b" style="left:1100px;top:320px;width:60px;height:60px"></div>
<div class="b" style="left:860px;top:380px;width:60px;height:60px"></div>
<div class="b" style="left:980px;top:380px;width:60px;height:60px"></div>
<div class="b" style="left:1100px;top:380px;width:60px;height:60px"></div>
<!-- P rows -->
<div class="b" style="left:860px;top:440px;width:60px;height:60px"></div>
<div class="b" style="left:920px;top:440px;width:60px;height:60px"></div>
<div class="b" style="left:980px;top:440px;width:60px;height:60px"></div>
<div class="b" style="left:1040px;top:440px;width:60px;height:60px"></div>
<div class="b" style="left:1100px;top:440px;width:45px;height:60px"></div>
<div class="b" style="left:1160px;top:440px;width:60px;height:60px"></div>
<div class="b" style="left:860px;top:500px;width:60px;height:60px"></div>
<div class="b" style="left:920px;top:500px;width:60px;height:60px"></div>
<div class="b" style="left:980px;top:500px;width:60px;height:60px"></div>
<div class="b" style="left:1040px;top:500px;width:60px;height:60px"></div>
<div class="b" style="left:1100px;top:500px;width:60px;height:60px"></div>
<div class="b" style="left:1160px;top:500px;width:60px;height:60px"></div>
<!-- tool table -->
<div class="a" style="left:860px;top:560px;width:180px;height:60px;background:#f0f0f0"></div>
<div class="a" style="left:860px;top:650px;width:180px;height:30px;background:#f0f0f0"></div>
<div class="t" style="left: 861px; top: 561px; line-height: 14px; letter-spacing: 0.67px;">Tool Length Correction,<br>mm</div>
<div class="t" style="left: 861px; top: 598px; letter-spacing: 0.78px;">Tool Length, mm</div>
<div class="t" style="left: 861px; top: 628px; letter-spacing: 0.64px;">Current Tool</div>
<div class="t" style="left: 861px; top: 658px; letter-spacing: 0.63px;">Next Tool</div>
<div class="t" style="left: 861px; top: 688px; letter-spacing: 0.7px;">Rotation Speed, degree/s</div>
<div class="blk" style="left:1040px;top:560px;width:120px;height:150px"></div>
<div class="b" style="left:1160px;top:640px;width:60px;height:60px"></div>
<div class="b" style="left:1160px;top:700px;width:60px;height:60px"></div>
<!-- G54 row -->
<div class="b" style="left:860px;top:760px;width:60px;height:60px"></div>
<div class="b" style="left:920px;top:760px;width:60px;height:60px"></div>
<div class="b" style="left:980px;top:760px;width:60px;height:60px"></div>
<div class="b" style="left:1040px;top:760px;width:60px;height:60px"></div>
<div class="blk" style="left:1100px;top:760px;width:60px;height:60px"></div>
<!-- big buttons -->
<div class="b" style="left:860px;top:820px;width:100px;height:100px"></div>
<div class="b" style="left:960px;top:820px;width:100px;height:100px"></div>
<div class="b" style="left:1060px;top:820px;width:100px;height:100px"></div>
<div class="b" style="left:860px;top:920px;width:100px;height:100px"></div>
<div class="b" style="left:960px;top:920px;width:100px;height:100px"></div>
<div class="b" style="left:1060px;top:920px;width:100px;height:100px"></div>
<div class="b" style="left:1160px;top:840px;width:60px;height:60px"></div>
<div class="b" style="left:1160px;top:900px;width:60px;height:60px"></div>
<div class="b" style="left:1160px;top:960px;width:60px;height:60px"></div>

<svg class="ov" width="1240" height="1040" viewBox="0 0 1240 1040"><defs>
 <linearGradient id="gTri" x1="0" y1="0" x2="0" y2="1">
  <stop offset="0" stop-color="#e6f4ff"></stop><stop offset="0.3" stop-color="#7cc0ff"></stop>
  <stop offset="0.5" stop-color="#3996f7"></stop><stop offset="0.75" stop-color="#4aa6ff"></stop><stop offset="1" stop-color="#b4e2ff"></stop>
 </linearGradient>
 <linearGradient id="gArr" x1="0" y1="0" x2="1" y2="1">
  <stop offset="0" stop-color="#5aaaf8"></stop><stop offset="0.45" stop-color="#2f8af2"></stop><stop offset="0.55" stop-color="#7cc4ff"></stop><stop offset="1" stop-color="#c8f0ff"></stop>
 </linearGradient>
 <linearGradient id="gBar" x1="0" y1="0" x2="0" y2="1">
  <stop offset="0" stop-color="#4a9ff5"></stop><stop offset="1" stop-color="#c8f2ff"></stop>
 </linearGradient>
 <linearGradient id="gStop" x1="0" y1="0" x2="0" y2="1">
  <stop offset="0" stop-color="#7a0000"></stop><stop offset="0.5" stop-color="#b80a0a"></stop><stop offset="1" stop-color="#e81010"></stop>
 </linearGradient>
 <linearGradient id="gLedG" x1="0" y1="0" x2="0" y2="1"><stop offset="0" stop-color="#e4ece4"></stop><stop offset="0.5" stop-color="#66c066"></stop><stop offset="1" stop-color="#8ef07a"></stop></linearGradient>
 <linearGradient id="gLedY" x1="0" y1="0" x2="0" y2="1"><stop offset="0" stop-color="#fafae6"></stop><stop offset="0.5" stop-color="#f6f09a"></stop><stop offset="1" stop-color="#f4ec50"></stop></linearGradient>
 <linearGradient id="gLedR" x1="0" y1="0" x2="0" y2="1"><stop offset="0" stop-color="#fbe6ea"></stop><stop offset="0.5" stop-color="#f27a8a"></stop><stop offset="1" stop-color="#f35c74"></stop></linearGradient>
 <linearGradient id="gLedN" x1="0" y1="0" x2="0" y2="1"><stop offset="0" stop-color="#f0f0f0"></stop><stop offset="0.5" stop-color="#b8b8b8"></stop><stop offset="1" stop-color="#9c9c9c"></stop></linearGradient>
 <linearGradient id="gLedF" x1="0" y1="0" x2="0" y2="1"><stop offset="0" stop-color="#a8a8a8"></stop><stop offset="1" stop-color="#e4e4e4"></stop></linearGradient>
 <linearGradient id="gSpin" x1="0" y1="0" x2="1" y2="0"><stop offset="0" stop-color="#6a6a6a"></stop><stop offset="0.35" stop-color="#e8e8e0"></stop><stop offset="0.7" stop-color="#8a8a86"></stop><stop offset="1" stop-color="#3a3a3a"></stop></linearGradient>
 <linearGradient id="gSlider" x1="0" y1="0" x2="1" y2="0"><stop offset="0" stop-color="#8a8a8a"></stop><stop offset="0.5" stop-color="#c8c8c8"></stop><stop offset="1" stop-color="#909090"></stop></linearGradient><linearGradient id="gKnob" x1="0" y1="0" x2="0" y2="1"><stop offset="0" stop-color="#ffffff"></stop><stop offset="0.5" stop-color="#d8d8d8"></stop><stop offset="1" stop-color="#a8a8a8"></stop></linearGradient>

 <g id="tL"><path d="M0 0.5 L1 0 L1 1 Z" fill="url(#gTri)" stroke="#0b2c88" stroke-width="2" stroke-linejoin="round" vector-effect="non-scaling-stroke"></path>
  <path d="M0.2 0.5 Q0.55 0.36 0.97 0.38" fill="none" stroke="#1a4fa8" stroke-opacity="0.55" stroke-width="0.8" vector-effect="non-scaling-stroke"></path></g>
 <g id="tLb"><path d="M0 0.5 L1 0 L1 1 Z" fill="url(#gTri)" stroke="#0b2c88" stroke-width="4" stroke-linejoin="round" vector-effect="non-scaling-stroke"></path>
  <path d="M0.2 0.5 Q0.55 0.36 0.97 0.38" fill="none" stroke="#1a4fa8" stroke-opacity="0.55" stroke-width="1" vector-effect="non-scaling-stroke"></path></g>
 <g id="led"><rect x="0" y="0" width="30" height="30" fill="url(#gLedF)"></rect></g>
 <g id="cross" fill="none" stroke="#2a50aa" stroke-width="1.3"><circle cx="25.7" cy="25.2" r="16"></circle><path d="M6.6 25.2H44.9M25.7 6V44.3"></path></g>
 <g id="spindle">
  <rect x="0" y="0" width="20" height="3.6" rx="0.8" fill="url(#gSpin)" stroke="#444" stroke-width="0.5"></rect>
  <path d="M1 3.6H19V9.5H18V14Q10 17 2 14V9.5H1Z" fill="url(#gSpin)"></path>
  <path d="M1 6.5H19M2 11.5H18" stroke="#707070" stroke-width="0.6"></path>
  <rect x="13" y="4" width="4.5" height="3.2" fill="#2a2a2a"></rect>
  <circle cx="5" cy="9.3" r="0.7" fill="#fff"></circle><circle cx="10" cy="9.3" r="0.7" fill="#fff"></circle><circle cx="15" cy="9.3" r="0.7" fill="#fff"></circle>
  <rect x="8.3" y="15" width="3.4" height="13" fill="#d0d0d0"></rect>
  <path d="M8.3 17L11.7 15.5M8.3 20L11.7 18.5M8.3 23L11.7 21.5M8.3 26L11.7 24.5" stroke="#555" stroke-width="0.8"></path>
 </g>
</defs>
<style>
 .bt{font-family:"Liberation Sans",sans-serif;font-weight:bold;font-style:italic;fill:#3d8ef6}
 .bto{font-family:"Liberation Sans",sans-serif;font-weight:bold;font-style:italic;fill:#5ab8ff;stroke:#1a4cc0;stroke-width:0.9}
</style>

<!-- speed arrows -->
<use href="#tL" transform="translate(157.4,823.7) scale(35.9,41.5)"></use>
<use href="#tL" transform="translate(292.6,823.7) scale(-35.9,41.5)"></use>
<use href="#tL" transform="translate(307.4,823.7) scale(35.9,41.5)"></use>
<use href="#tL" transform="translate(442.6,823.7) scale(-35.9,41.5)"></use>
<use href="#tL" transform="translate(457.4,823.7) scale(35.9,41.5)"></use>
<use href="#tL" transform="translate(592.6,823.7) scale(-35.9,41.5)"></use>
<use href="#tL" transform="translate(607.4,823.7) scale(35.9,41.5)"></use>
<use href="#tL" transform="translate(742.6,823.7) scale(-35.9,41.5)"></use>
<!-- G0 arrows -->
<use href="#tL" transform="translate(706.3,888.6) scale(32.7,37.1)"></use>
<use href="#tL" transform="translate(843.2,888.6) scale(-32.6,37.1)"></use>
<use href="#tL" transform="translate(706.3,948.6) scale(32.7,37.1)"></use>
<use href="#tL" transform="translate(843.2,948.6) scale(-32.6,37.1)"></use>
<!-- transport -->
<use href="#tL" transform="translate(84.4,621.4) scale(39.2,44.4)"></use>
<rect x="127.4" y="621.4" width="6.9" height="44.4" rx="1" fill="url(#gBar)" stroke="#0b2c88" stroke-width="2"></rect>
<use href="#tL" transform="translate(254.2,621.4) scale(-39.2,44.4)"></use>
<rect x="204" y="621.4" width="6.9" height="44.4" rx="1" fill="url(#gBar)" stroke="#0b2c88" stroke-width="2"></rect>
<!-- jog -->
<use href="#tL" transform="translate(647.5,629) scale(26,29.3)"></use><use href="#tL" transform="translate(627,629) scale(26,29.3)"></use>
<text x="641" y="670" class="bt" font-size="15" textLength="24" lengthAdjust="spacingAndGlyphs" fill="#4a93e8">x10</text>
<use href="#tL" transform="translate(707.5,629) scale(26,29.3)"></use><use href="#tL" transform="translate(687,629) scale(26,29.3)"></use>
<use href="#tL" transform="translate(773,629) scale(-26,29.3)"></use><use href="#tL" transform="translate(793.5,629) scale(-26,29.3)"></use>
<use href="#tL" transform="translate(833,629) scale(-26,29.3)"></use><use href="#tL" transform="translate(853.5,629) scale(-26,29.3)"></use>
<text x="825" y="669" class="bt" font-size="15" textLength="24" lengthAdjust="spacingAndGlyphs" fill="#4a93e8">x10</text>
<!-- big buttons -->
<use href="#tLb" transform="translate(874.9,828.3) scale(71.9,81.4)"></use>
<use href="#tLb" transform="translate(1145.1,828.3) scale(-71.9,81.4)"></use>
<use href="#tLb" transform="translate(883,933) scale(64.3,73.5)"></use>
<rect x="871.5" y="932" width="11.5" height="73.5" rx="2" fill="url(#gBar)" stroke="#0b2c88" stroke-width="3"></rect>
<rect x="1073.5" y="961.8" width="73" height="16.2" rx="3" fill="#93c6ff" stroke="#0a44b8" stroke-width="2.5"></rect>
<!-- LEDs -->
<defs>
 <g id="ledG"><rect width="30" height="30" fill="url(#gLedF)"></rect><rect x="3.5" y="3.5" width="23" height="23" fill="url(#gLedG)" stroke="#2e8a2e" stroke-width="1"></rect><path d="M5 5H25V13Q15 17 5 13Z" fill="#fff" fill-opacity="0.25"></path></g>
 <g id="ledY"><rect width="30" height="30" fill="url(#gLedF)"></rect><rect x="3.5" y="3.5" width="23" height="23" fill="url(#gLedY)" stroke="#a8a440" stroke-width="1"></rect><path d="M5 5H25V13Q15 17 5 13Z" fill="#fff" fill-opacity="0.3"></path></g>
 <g id="ledR"><rect width="30" height="30" fill="url(#gLedF)"></rect><rect x="3.5" y="3.5" width="23" height="23" fill="url(#gLedR)" stroke="#b03040" stroke-width="1"></rect><path d="M5 5H25V13Q15 17 5 13Z" fill="#fff" fill-opacity="0.3"></path></g>
 <g id="ledN"><rect width="30" height="30" fill="url(#gLedF)"></rect><rect x="3.5" y="3.5" width="23" height="23" fill="url(#gLedN)" stroke="#888" stroke-width="1"></rect><path d="M5 5H25V13Q15 17 5 13Z" fill="#fff" fill-opacity="0.3"></path></g>
</defs>
<use href="#ledG" x="180" y="870"></use><use href="#ledG" x="180" y="900"></use><use href="#ledG" x="180" y="930"></use><use href="#ledG" x="180" y="960"></use>
<use href="#ledY" x="270" y="870"></use><use href="#ledY" x="270" y="900"></use><use href="#ledY" x="270" y="930"></use><use href="#ledY" x="270" y="960"></use>
<use href="#ledR" x="420" y="870"></use><use href="#ledY" x="420" y="900"></use><use href="#ledN" x="420" y="930"></use><use href="#ledN" x="420" y="960"></use>
<use href="#ledN" x="530" y="870"></use><use href="#ledN" x="530" y="900"></use><use href="#ledN" x="530" y="930"></use><use href="#ledR" x="530" y="960"></use>
<use href="#ledR" x="660" y="870"></use><use href="#ledY" x="660" y="900"></use><use href="#ledY" x="660" y="930"></use><use href="#ledN" x="660" y="960"></use>

<!-- axis zero crosshairs -->
<use href="#cross" x="860" y="20"></use><use href="#cross" x="860" y="80"></use><use href="#cross" x="860" y="140"></use><use href="#cross" x="860" y="200"></use>
<g font-family="Liberation Sans" font-size="21" fill="#0a3a9a">
 <text x="900.5" y="75" textLength="13" lengthAdjust="spacingAndGlyphs">X</text>
 <text x="900.5" y="135" textLength="13" lengthAdjust="spacingAndGlyphs">Y</text>
 <text x="900.5" y="195" textLength="13" lengthAdjust="spacingAndGlyphs">Z</text>
 <text x="900.5" y="255" textLength="13" lengthAdjust="spacingAndGlyphs">A</text>
</g>
<!-- SET -->
<g class="bt" font-size="31">
 <text x="1105" y="61" textLength="50" lengthAdjust="spacingAndGlyphs">SET</text>
 <text x="1105" y="121" textLength="50" lengthAdjust="spacingAndGlyphs">SET</text>
 <text x="1105" y="181" textLength="50" lengthAdjust="spacingAndGlyphs">SET</text>
 <text x="1105" y="241" textLength="50" lengthAdjust="spacingAndGlyphs">SET</text>
</g>
<!-- M codes text -->
<g class="bt" font-size="21">
 <text x="1169" y="76" textLength="41" lengthAdjust="spacingAndGlyphs">M03</text>
 <text x="1169" y="136" textLength="41" lengthAdjust="spacingAndGlyphs">M04</text>
 <text x="1169" y="196" textLength="41" lengthAdjust="spacingAndGlyphs">M05</text>
 <text x="1169" y="256" textLength="41" lengthAdjust="spacingAndGlyphs">M06</text>
 <text x="1169" y="316" textLength="41" lengthAdjust="spacingAndGlyphs">M07</text>
 <text x="1169" y="376" textLength="41" lengthAdjust="spacingAndGlyphs">M08</text>
 <text x="1169" y="436" textLength="41" lengthAdjust="spacingAndGlyphs">M09</text>
 <text x="1102" y="480.5" font-size="28" textLength="41.5" lengthAdjust="spacingAndGlyphs">M01</text>
</g>
<!-- M icons -->
<use href="#spindle" x="1180" y="24"></use>
<path d="M1178 41Q1166 45 1173 52Q1190 60 1207 52Q1213 46 1203 41" fill="none" stroke="#139a13" stroke-width="3.5"></path>
<path d="M1172 38L1183 39L1176 47Z M1208 38L1197 39L1204 47Z" fill="#139a13"></path>
<use href="#spindle" x="1180" y="84"></use>
<path d="M1178 101Q1166 105 1173 112Q1190 120 1207 112Q1213 106 1203 101" fill="none" stroke="#139a13" stroke-width="3.5"></path>
<path d="M1172 98L1183 99L1176 107Z M1208 98L1197 99L1204 107Z" fill="#139a13"></path>
<use href="#spindle" x="1180" y="144"></use>
<path d="M1195.9 158.9h7.6l5.4 5.4v7.6l-5.4 5.4h-7.6l-5.4-5.4v-7.6z" fill="#e01010" stroke="#fff" stroke-width="0.8"></path>
<text x="1192" y="171" font-family="Liberation Sans" font-weight="bold" font-size="6" fill="#fff" textLength="15" lengthAdjust="spacingAndGlyphs">STOP</text>
<use href="#spindle" transform="translate(1166,204) scale(0.85)"></use><use href="#spindle" transform="translate(1199,204) scale(0.85)"></use>
<path d="M1177 230H1200" stroke="#1a3cc8" stroke-width="2"></path><path d="M1204 230L1196 226V234Z" fill="#1a3cc8"></path>
<use href="#spindle" transform="translate(1181,266) scale(0.9)"></use>
<path d="M1165.5 266.6H1173.6V279L1180.5 281.6L1175 287.5L1165.5 285Z" fill="#1a50d0"></path>
<path d="M1176 284L1190 289M1175 286L1187 293M1174 287L1181 295M1177 283L1192 285" stroke="#8a8a8a" stroke-width="0.7"></path>
<use href="#spindle" transform="translate(1181,326) scale(0.9)"></use>
<path d="M1208.2 326H1215.2V339L1201 345L1199.5 342Z" fill="#1a50d0"></path>
<path d="M1199.6 344Q1204 349 1203.5 351A4 4 0 0 1 1195.6 351Q1195.5 349 1199.6 344Z" fill="#c8a020"></path>
<use href="#spindle" transform="translate(1181,386) scale(0.9)"></use>
<path d="M1165.8 387.3H1173.6V401L1180 404L1176 408L1165.8 405Z M1208 387.3H1215V405L1205 408L1202 404L1208 401Z" fill="#98a8d8" fill-opacity="0.75"></path>
<path d="M1166.5 402L1179 414M1179 402L1166.5 414M1200.3 402L1212.8 414M1212.8 402L1200.3 414" stroke="#e00000" stroke-width="3.5"></path>

<!-- A+ A- Z+ Z- -->
<g class="bto" font-size="37">
 <text x="864.6" y="303" textLength="44" lengthAdjust="spacingAndGlyphs">A+</text>
 <text x="868.8" y="423" textLength="43.5" lengthAdjust="spacingAndGlyphs">A–</text>
 <text x="1105" y="303.6" textLength="40" lengthAdjust="spacingAndGlyphs">Z+</text>
 <text x="1108" y="423" textLength="40" lengthAdjust="spacingAndGlyphs">Z–</text>
</g>
<!-- block arrows -->
<path d="M1009.8 265.4L1032.3 288H1024.2V312.5H996.3V288H987.7Z" fill="url(#gArr)" stroke="#0b3aa8" stroke-width="2" stroke-linejoin="round"></path>
<path d="M925.8 349L948.3 327V334.6H972.7V363.5H948.3V371.2Z" fill="url(#gArr)" stroke="#0b3aa8" stroke-width="2" stroke-linejoin="round"></path>
<path d="M1094.2 349L1071.7 327V334.6H1047.3V363.5H1071.7V371.2Z" fill="url(#gArr)" stroke="#0b3aa8" stroke-width="2" stroke-linejoin="round"></path>
<path d="M1009.8 431.7L1032.3 409.6H1024.2V385.6H996.3V409.6H987.7Z" fill="url(#gArr)" stroke="#0b3aa8" stroke-width="2" stroke-linejoin="round"></path>
<!-- remote -->
<defs><linearGradient id="gRem" x1="0" y1="0" x2="0" y2="1"><stop offset="0" stop-color="#6aa0f0"></stop><stop offset="1" stop-color="#3a70d0"></stop></linearGradient></defs>
<g transform="translate(1130,349.5) rotate(-43)">
 <rect x="-31" y="-11.5" width="62" height="23" rx="5" fill="url(#gRem)" stroke="#1a4ab8" stroke-width="1.3"></rect>
 <circle cx="-13" cy="0" r="8.5" fill="#5a8ad8" stroke="#8ab0ec" stroke-width="0.8"></circle>
 <circle cx="-13" cy="0" r="5" fill="#b8daf8" stroke="#e8f4ff" stroke-width="0.8"></circle>
 <circle cx="12" cy="-3" r="5.5" fill="#f01010" stroke="#b00000" stroke-width="0.6"></circle>
 <circle cx="3" cy="-6.5" r="2.2" fill="#e8f0ff"></circle><circle cx="3" cy="5.5" r="2.2" fill="#e8f0ff"></circle>
 <rect x="21" y="-8" width="6.5" height="16" rx="2" fill="none" stroke="#f0f6ff" stroke-width="1.2"></rect>
</g>
<!-- P buttons -->
<defs>
 <g id="pP"><rect x="3" y="3.5" width="28" height="28" fill="#003399"></rect><text x="9" y="28.5" font-family="Liberation Sans" font-size="27" font-style="normal" font-weight="normal" stroke="none" fill="#fff" textLength="15" lengthAdjust="spacingAndGlyphs">P</text></g>
 <g id="pT"><path d="M7.1 36.4L24.9 46.2L7.1 56Z" fill="#0000ee"></path></g>
 <g id="pC"><circle cx="13" cy="45.7" r="8.7" fill="#ff0000"></circle></g>
</defs>
<g class="bto" font-size="45">
 <use href="#pP" x="860" y="440"></use><use href="#pT" x="860" y="440"></use><text x="884" y="496.6" textLength="28" lengthAdjust="spacingAndGlyphs">1</text>
 <use href="#pP" x="920" y="440"></use><use href="#pT" x="920" y="440"></use><text x="946" y="496.6" textLength="29" lengthAdjust="spacingAndGlyphs">2</text>
 <use href="#pP" x="980" y="440"></use><use href="#pT" x="980" y="440"></use><text x="1006" y="496.6" textLength="29" lengthAdjust="spacingAndGlyphs">3</text>
 <use href="#pP" x="1040" y="440"></use><use href="#pT" x="1040" y="440"></use><text x="1066" y="496.6" textLength="29" lengthAdjust="spacingAndGlyphs">4</text>
 <use href="#pP" x="860" y="500"></use><use href="#pC" x="860" y="500"></use><text x="884" y="556.5" textLength="28" lengthAdjust="spacingAndGlyphs">1</text>
 <use href="#pP" x="920" y="500"></use><use href="#pC" x="920" y="500"></use><text x="946" y="556.5" textLength="29" lengthAdjust="spacingAndGlyphs">2</text>
 <use href="#pP" x="980" y="500"></use><use href="#pC" x="980" y="500"></use><text x="1006" y="556.5" textLength="29" lengthAdjust="spacingAndGlyphs">3</text>
 <use href="#pP" x="1040" y="500"></use><use href="#pC" x="1040" y="500"></use><text x="1066" y="556.5" textLength="29" lengthAdjust="spacingAndGlyphs">4</text>
</g>
<!-- M01 slider -->
<rect x="1145" y="440" width="15" height="60" fill="url(#gSlider)"></rect>
<rect x="1147.6" y="448" width="10" height="46" rx="1.5" fill="url(#gKnob)" stroke="#e8e8e8" stroke-width="0.8"></rect>
<!-- ATC / XYZ targets -->
<defs><g id="tgt"><path d="M0 0V-16A16 16 0 0 0 -16 0Z M0 0V16A16 16 0 0 0 16 0Z" fill="#003399"></path><circle r="16" fill="none" stroke="#1a3a9a" stroke-width="1.3"></circle><path d="M-20 0H20M0 -20V20" stroke="#1a3a9a" stroke-width="1.3"></path></g></defs>
<use href="#tgt" x="1186" y="465.4"></use><text x="1195" y="494.2" font-family="Liberation Sans" font-size="12" fill="#1a3a9a" textLength="21" lengthAdjust="spacingAndGlyphs">ATC</text>
<use href="#tgt" x="1185.8" y="664.9"></use><text x="1195" y="694" font-family="Liberation Sans" font-size="12" fill="#1a3a9a" textLength="21" lengthAdjust="spacingAndGlyphs">XYZ</text>
<text x="1180" y="743.2" class="bto" font-size="37" textLength="17.5" lengthAdjust="spacingAndGlyphs">0</text>
<!-- tool length sensor -->
<use href="#spindle" transform="translate(1170,504.7) scale(1.4,1.1)"></use>
<path d="M1188 529.6H1210M1188 543.7H1210M1206.6 517V528M1206.6 555V545" stroke="#111" stroke-width="1"></path>
<path d="M1206.6 529L1204 523H1209Z M1206.6 544L1204 550H1209Z" fill="#111"></path>
<!-- G54..G57 -->
<defs><g id="axes"><path d="M21 23.6V9" stroke="#e00" stroke-width="1.6"></path><path d="M21 6.4L18.5 12H23.5Z" fill="#e00"></path>
 <path d="M21 23.6L37 16.5" stroke="#18a018" stroke-width="1.6"></path><path d="M41 15.2L35 14L37 19.5Z" fill="#18a018"></path>
 <path d="M21 23.6L37 31" stroke="#1840c8" stroke-width="1.6"></path><path d="M41 32.5L35 28L34 33Z" fill="#1840c8"></path>
 <circle cx="21" cy="23.6" r="1" fill="#e00"></circle></g></defs>
<use href="#axes" x="860" y="760"></use><use href="#axes" x="920" y="760"></use><use href="#axes" x="980" y="760"></use><use href="#axes" x="1040" y="760"></use>
<g class="bt" font-size="22">
 <text x="871" y="814" textLength="38" lengthAdjust="spacingAndGlyphs">G54</text>
 <text x="931" y="814" textLength="38" lengthAdjust="spacingAndGlyphs">G55</text>
 <text x="991" y="814" textLength="38" lengthAdjust="spacingAndGlyphs">G56</text>
 <text x="1051" y="814" textLength="38" lengthAdjust="spacingAndGlyphs">G57</text>
</g>
<!-- big STOP -->
<defs><g id="stopS"><path d="M-16.6 -40H16.6L40 -16.6V16.6L16.6 40H-16.6L-40 16.6V-16.6Z" fill="#e01515"></path><path d="M-15.3 -36.8H15.3L36.8 -15.3V15.3L15.3 36.8H-15.3L-36.8 15.3V-15.3Z" fill="url(#gStop)" stroke="#fff" stroke-width="2"></path>
 <ellipse cx="0" cy="-14" rx="30" ry="14" fill="#fff" fill-opacity="0.08"></ellipse></g></defs>
<use href="#stopS" x="1010" y="869.7"></use>
<text x="978.9" y="879.6" font-family="Liberation Sans" font-weight="bold" font-size="26" fill="#fff" textLength="62" lengthAdjust="spacingAndGlyphs">STOP</text>
<use href="#stopS" transform="translate(169.8,643.8) scale(0.6)"></use>
<text x="151" y="650" font-family="Liberation Sans" font-weight="bold" font-size="16" fill="#fff" textLength="37.5" lengthAdjust="spacingAndGlyphs">STOP</text>
<!-- tool probe big -->
<use href="#spindle" transform="translate(1012,929) scale(1.75,1.75)"></use>
<path d="M1024.8 981.5L998 1002" stroke="#000" stroke-width="2.5"></path><path d="M994.8 1004.8L998 995L1004 1001Z" fill="#000"></path>
<path d="M972.3 984L982.3 1010.5L992.3 984Z" fill="#e00"></path><ellipse cx="982.3" cy="984" rx="10" ry="4" fill="#e00" stroke="#900" stroke-width="0.8"></ellipse>
<!-- wands -->
<defs><g id="wand">
 <ellipse cx="30" cy="55" rx="28" ry="2" fill="#c8bca8" fill-opacity="0.6"></ellipse>
 <path d="M13.5 47L57 3" stroke="#111" stroke-width="5" stroke-linecap="round"></path>
 <path d="M14 46.5L19 41.5" stroke="#ddd" stroke-width="4.5"></path><path d="M13.5 47L15.5 45" stroke="#111" stroke-width="5" stroke-linecap="round"></path>
 <circle cx="3" cy="17" r="1.6" fill="#d49a10"></circle><circle cx="17" cy="19" r="1.6" fill="#d49a10"></circle>
 <path id="st" d="M0 -4L1.2 -1.3L4 -1.2L1.9 0.7L2.5 3.5L0 2L-2.5 3.5L-1.9 0.7L-4 -1.2L-1.2 -1.3Z" fill="#d49a10" transform="translate(10,28)"></path>
 <use href="#st" transform="translate(-2,12)"></use><use href="#st" transform="translate(16,25)"></use>
</g></defs>
<use href="#wand" x="1160" y="840"></use><use href="#wand" x="1160" y="900"></use><use href="#wand" x="1160" y="960"></use>
<g class="bto" font-size="24">
 <text x="1199" y="890" textLength="14" lengthAdjust="spacingAndGlyphs">X</text>
 <text x="1199" y="950" textLength="14" lengthAdjust="spacingAndGlyphs">Y</text>
 <text x="1199" y="1010" textLength="14" lengthAdjust="spacingAndGlyphs">Z</text>
</g>
<!-- DRO -->
<g font-family="Liberation Sans" font-weight="bold" fill="#ff0000" font-size="24.5">
 <text x="991" y="43.9" textLength="108" lengthAdjust="spacingAndGlyphs">622.673</text>
 <text x="1022.5" y="103.9" textLength="76.5" lengthAdjust="spacingAndGlyphs">22.023</text>
 <text x="1022.5" y="163.9" textLength="76.5" lengthAdjust="spacingAndGlyphs">34.613</text>
 <text x="1037" y="223.9" textLength="62" lengthAdjust="spacingAndGlyphs">0.000</text>
</g>
<g font-family="Liberation Sans" font-weight="bold" fill="#ffffff" font-size="13.5">
 <text x="1036.5" y="62.8" textLength="63" lengthAdjust="spacingAndGlyphs">622.673</text>
 <text x="1054" y="122.8" textLength="45.5" lengthAdjust="spacingAndGlyphs">22.023</text>
 <text x="1054" y="182.8" textLength="45.5" lengthAdjust="spacingAndGlyphs">37.236</text>
 <text x="1063" y="242.8" textLength="36.5" lengthAdjust="spacingAndGlyphs">0.000</text>
</g>
<g font-family="Liberation Sans" font-weight="bold" fill="#00e8f4" font-size="12">
 <text x="1085.7" y="579.9" textLength="42" lengthAdjust="spacingAndGlyphs">0.000</text>
 <text x="1079.2" y="609.8" textLength="50" lengthAdjust="spacingAndGlyphs">37.553</text>
 <text x="1090.7" y="639.8" textLength="18" lengthAdjust="spacingAndGlyphs">T9</text>
 <text x="1090.7" y="669.8" textLength="18" lengthAdjust="spacingAndGlyphs">T9</text>
 <text x="1095.5" y="699.5" textLength="8.5" lengthAdjust="spacingAndGlyphs">0</text>
 <text x="1115.3" y="795" textLength="29" lengthAdjust="spacingAndGlyphs" font-size="12.5">G54</text>
</g>
<text x="990.7" y="354.8" font-family="Liberation Sans" font-weight="bold" font-size="13" fill="#111" textLength="43.5" lengthAdjust="spacingAndGlyphs">88.88</text>
<!-- ================= toolbar pictorial icons ================= -->
<defs>
 <radialGradient id="gGear" cx="0.5" cy="0.5" r="0.5"><stop offset="0.55" stop-color="#8c9498"></stop><stop offset="0.8" stop-color="#6a7378"></stop><stop offset="1" stop-color="#9aa0a4"></stop></radialGradient>
 <linearGradient id="gFold" x1="0" y1="0" x2="0" y2="1"><stop offset="0" stop-color="#6cc4ff"></stop><stop offset="1" stop-color="#eaf8ff"></stop></linearGradient>
 <linearGradient id="gFoldB" x1="0" y1="0" x2="0" y2="1"><stop offset="0" stop-color="#5ab4f0"></stop><stop offset="1" stop-color="#1a88d8"></stop></linearGradient>
 <linearGradient id="gPaper" x1="0" y1="0" x2="1" y2="0"><stop offset="0" stop-color="#e0e0e0"></stop><stop offset="0.5" stop-color="#ffffff"></stop><stop offset="1" stop-color="#b8b8b8"></stop></linearGradient>
 <radialGradient id="gLens" cx="0.45" cy="0.35" r="0.6"><stop offset="0" stop-color="#f4faff"></stop><stop offset="0.6" stop-color="#a8d0ff"></stop><stop offset="1" stop-color="#5a9ef0"></stop></radialGradient>
 <linearGradient id="gHandle" x1="0" y1="0" x2="1" y2="0"><stop offset="0" stop-color="#ffd040"></stop><stop offset="1" stop-color="#f07000"></stop></linearGradient>
 <linearGradient id="gRef" x1="0" y1="0" x2="1" y2="1"><stop offset="0" stop-color="#c8dcf0"></stop><stop offset="0.5" stop-color="#7aa8dc"></stop><stop offset="1" stop-color="#4a84c8"></stop></linearGradient>
 <radialGradient id="gBall" cx="0.35" cy="0.3" r="0.7"><stop offset="0" stop-color="#e8e8e8"></stop><stop offset="0.6" stop-color="#8a8a8a"></stop><stop offset="1" stop-color="#5a5a5a"></stop></radialGradient>
 <linearGradient id="gCyl" x1="0" y1="0" x2="1" y2="0"><stop offset="0" stop-color="#707070"></stop><stop offset="0.35" stop-color="#e0e0e0"></stop><stop offset="1" stop-color="#505050"></stop></linearGradient>
 <linearGradient id="gFan" x1="0" y1="0" x2="0" y2="1"><stop offset="0" stop-color="#d8eeff"></stop><stop offset="1" stop-color="#6ab8ff"></stop></linearGradient>
 <radialGradient id="gPow" cx="0.5" cy="0.3" r="0.7"><stop offset="0" stop-color="#f89090"></stop><stop offset="0.45" stop-color="#ee2626"></stop><stop offset="1" stop-color="#e82020"></stop></radialGradient>
 <g id="gearShape"><path d="M0 -1 L0.13 -1 L0.16 -0.86 A0.87 0.87 0 0 1 0.44 -0.74 L0.56 -0.83 L0.75 -0.66 L0.66 -0.54 A0.87 0.87 0 0 1 0.83 -0.27 L0.97 -0.26 L1 0 L0.86 0.05" fill="#aaa"></path></g>
</defs>
<!-- gear -->
<defs><radialGradient id="gRing" cx="0.5" cy="0.5" r="0.5"><stop offset="0.5" stop-color="#9aa2a6"></stop><stop offset="0.75" stop-color="#6a757b"></stop><stop offset="1" stop-color="#8a9296"></stop></radialGradient></defs>
<g transform="translate(43.5,44.5)">
 <g fill="#b6b6b6"><rect x="-3.5" y="-22.5" width="7" height="45.0" rx="1" transform="rotate(0.0)"></rect><rect x="-3.5" y="-22.5" width="7" height="45.0" rx="1" transform="rotate(30.0)"></rect><rect x="-3.5" y="-22.5" width="7" height="45.0" rx="1" transform="rotate(60.0)"></rect><rect x="-3.5" y="-22.5" width="7" height="45.0" rx="1" transform="rotate(90.0)"></rect><rect x="-3.5" y="-22.5" width="7" height="45.0" rx="1" transform="rotate(120.0)"></rect><rect x="-3.5" y="-22.5" width="7" height="45.0" rx="1" transform="rotate(150.0)"></rect></g>
 <circle r="19.5" fill="#b8b8b8"></circle>
 <circle r="16.5" fill="url(#gRing)"></circle>
 <circle r="9" fill="#e4e4e4" stroke="#b0b0b0" stroke-width="1.2"></circle>
</g>
<g transform="translate(60,64)">
 <g fill="#b6b6b6"><rect x="-2.5" y="-14" width="5" height="28" rx="1" transform="rotate(0.0)"></rect><rect x="-2.5" y="-14" width="5" height="28" rx="1" transform="rotate(36.0)"></rect><rect x="-2.5" y="-14" width="5" height="28" rx="1" transform="rotate(72.0)"></rect><rect x="-2.5" y="-14" width="5" height="28" rx="1" transform="rotate(108.0)"></rect><rect x="-2.5" y="-14" width="5" height="28" rx="1" transform="rotate(144.0)"></rect></g>
 <circle r="11" fill="#b8b8b8"></circle>
 <circle r="9.8" fill="url(#gRing)"></circle>
 <circle r="5.3" fill="#e0e0e0" stroke="#a8a8a8" stroke-width="0.8"></circle>
</g>
<!-- folder -->
<path d="M89.4 46V31Q89.4 29 91.5 29H105L108 33.8H129Q130.8 33.8 130.8 36V46Z" fill="url(#gFoldB)" stroke="#2a3ac8" stroke-width="0.8"></path>
<rect x="95.2" y="37" width="29.8" height="9.5" fill="url(#gPaper)"></rect>
<path d="M85.5 46.1H134L130.5 70H89.5Z" fill="url(#gFold)" stroke="#2a3ac8" stroke-width="0.9" stroke-linejoin="round"></path>
<!-- refresh -->
<ellipse cx="171" cy="69" rx="19" ry="3.5" fill="#c4b8a0" fill-opacity="0.6"></ellipse>
<path d="M153.5 51Q151 33 170 31Q180 31 185 38" fill="none" stroke="#3a70b8" stroke-width="9.5"></path>
<path d="M153.5 51Q151 33 170 31Q180 31 185 38" fill="none" stroke="url(#gRef)" stroke-width="7.5"></path>
<path d="M191.8 29.5V48.5H173Z" fill="#6a9ad0" stroke="#3a70b8" stroke-width="0.8" stroke-linejoin="round"></path>
<path d="M187 51Q189 68 170 69Q160 69 155 62" fill="none" stroke="#3a70b8" stroke-width="9.5"></path>
<path d="M187 51Q189 68 170 69Q160 69 155 62" fill="none" stroke="url(#gRef)" stroke-width="7.5"></path>
<path d="M149 69.5V51H167.5Z" fill="#8ab4e0" stroke="#3a70b8" stroke-width="0.8" stroke-linejoin="round"></path>
<!-- HPGL DXF -->
<path d="M226 36V24.5Q226 22.2 228 22.2H239L242 25.5H255Q257 25.5 257 28V36Z" fill="url(#gFoldB)" stroke="#2a3ac8" stroke-width="0.8"></path>
<rect x="231" y="28" width="22" height="7" fill="url(#gPaper)"></rect>
<path d="M224.4 35.5H257.8L255.5 51.2H227Z" fill="#78c4ff" stroke="#2a3ac8" stroke-width="0.8"></path>
<g class="bt" font-size="13.5" fill="#3a8cf5"><text x="203" y="63.5" textLength="42" lengthAdjust="spacingAndGlyphs">HPGL</text><text x="203" y="75.9" textLength="32" lengthAdjust="spacingAndGlyphs">DXF</text></g>
<!-- zoom + / - / fit -->
<defs><g id="mag">
 <path d="M12 12L25 25" stroke="#c02000" stroke-width="8.5" stroke-linecap="round"></path>
 <path d="M12 12L25 25" stroke="url(#gHandle)" stroke-width="6" stroke-linecap="round"></path>
 <path d="M10 10L14 14" stroke="#c8c8c8" stroke-width="4"></path>
 <circle r="16.5" fill="#888"></circle><circle r="15.5" fill="#e8e8e8"></circle><circle r="13.5" fill="url(#gLens)" stroke="#4a6ad8" stroke-width="0.8"></circle>
</g></defs>
<use href="#mag" x="284" y="43.2"></use>
<path d="M277 52H285V58.3H291.3V66.3H285V72.6H277V66.3H270.7V58.3H277Z" fill="#fff" stroke="#3a8a3a" stroke-width="1"></path>
<path d="M278.5 53.5H283.5V59.8H289.8V64.8H283.5V71.1H278.5V64.8H272.2V59.8H278.5Z" fill="#119a11"></path>
<use href="#mag" x="344.2" y="43.2"></use>
<rect x="330.4" y="62.8" width="21.8" height="10.2" rx="2.5" fill="#fff" stroke="#3a8a3a" stroke-width="1"></rect>
<rect x="332.4" y="64.8" width="17.8" height="6.2" rx="1" fill="#119a11"></rect>
<path d="M383 54L401 48.5L437.8 55L420 59Z" fill="#857540"></path><path d="M383 54L420 59V61L383 56Z" fill="#6a5a30"></path><path d="M420 59L437.8 55V57L420 61Z" fill="#5a4a24"></path>
<path d="M385 56V70M395 57.5V77M434.5 57V72M418 61V66" stroke="#6a5a30" stroke-width="2.5"></path>
<use href="#mag" transform="translate(406.6,41.8) scale(0.92)"></use>
<!-- Y X axes -->
<g stroke="#1a40a8" stroke-width="1.6" fill="none"><path d="M507.5 29V75M497 66.5H548.5"></path></g>
<g font-family="Liberation Sans" font-size="15" fill="#1a40a8"><text x="508" y="40.5" textLength="10" lengthAdjust="spacingAndGlyphs">Y</text><text x="535.5" y="64" textLength="10" lengthAdjust="spacingAndGlyphs">X</text></g>
<!-- 3D box -->
<g stroke="#1a40a8" stroke-width="1.3" fill="none" stroke-linejoin="round">
 <path d="M583 33.8L564.25 44.2L583 54.6L601.2 44.2Z"></path>
 <path d="M564.25 44.2V58.7L583 69L601.2 58.7V44.2M583 54.6V69M583 33.8V47"></path>
 <path d="M564.25 44.2L601.2 58.7M564.25 58.7L588 45M564.25 44V38M583 69L587 71.5"></path>
</g>
<path d="M563.9 35L561.8 40.5H566Z M592 43L585.5 44L588 48Z M590.5 74L584.5 72.5L587 69.5Z" fill="#1a40a8"></path>
<g font-family="Liberation Sans" font-size="10.5" fill="#1a40a8"><text x="565.5" y="34.7" textLength="7.5" lengthAdjust="spacingAndGlyphs">Z</text><text x="595" y="40.5" textLength="7.2" lengthAdjust="spacingAndGlyphs">Y</text><text x="591.3" y="78.6" textLength="7" lengthAdjust="spacingAndGlyphs">X</text></g>
<!-- probe -->
<path d="M688.2 25V41Q697.5 45 706.8 41V25Z" fill="url(#gCyl)"></path><ellipse cx="697.5" cy="25" rx="9.3" ry="2.6" fill="#d0d0d0" stroke="#888" stroke-width="0.5"></ellipse>
<circle cx="690.8" cy="29.5" r="1.1" fill="#e03030"></circle><circle cx="690.8" cy="38" r="1.1" fill="#30b030"></circle>
<path d="M696.5 43V61L697.5 64L698.5 61V43Z" fill="#333"></path>
<!-- fan -->
<g transform="translate(760.3,42.9)" fill="url(#gFan)" stroke="#3a70e0" stroke-width="0.9">
 <path d="M-3 -3Q-12 -12 -6 -19Q2 -23 9 -18Q11 -10 3 -3Z"></path>
 <path d="M4 1Q14 0 19 6Q20 13 12 16Q4 14 1 4Z"></path>
 <path d="M-3 3Q-6 13 -12 17Q-19 17 -21 9Q-17 2 -4 0Z"></path>
 <circle r="5" fill="#8ecbff" stroke="#6aa8f0"></circle>
</g>
<circle cx="735.5" cy="69.7" r="6.3" fill="url(#gBall)"></circle>
<!-- slider top -->
<rect x="785" y="20" width="15" height="60" fill="url(#gSlider)"></rect>
<rect x="787.4" y="28.9" width="9.6" height="45" rx="1.5" fill="url(#gKnob)" stroke="#e8e8e8" stroke-width="0.8"></rect>
<!-- CV -->
<text x="805.5" y="61.1" class="bt" font-size="30" fill="#3a8cf5" textLength="37" lengthAdjust="spacingAndGlyphs">CV</text>
<circle cx="847.9" cy="66" r="6.3" fill="url(#gBall)"></circle>
<path d="M833.4 52.3V70L837.5 66L840.5 72.5L843.5 71L840.5 64.8H846Z" fill="#404040" stroke="#f0f0f0" stroke-width="0.6"></path>

<!-- ================= left column icons ================= -->
<!-- pencil note -->
<path d="M24.8 85.2H62.9V123.6H31L24.8 117Z" fill="#f8f094" stroke="#e8d860" stroke-width="0.6"></path>
<path d="M24.8 117L31 123.6Q30 118 24.8 117Z" fill="#e8e070"></path>
<g transform="translate(37.3,98.2) rotate(44.5)">
 <path d="M0 0L8 -4.5V4.5Z" fill="#f4dcb0"></path><path d="M0 0L3 -1.7V1.7Z" fill="#222"></path>
 <rect x="8" y="-4.5" width="30" height="9" fill="#f8a010"></rect><rect x="8" y="-4.5" width="30" height="3" fill="#ffd040"></rect>
 <rect x="38" y="-4.5" width="6" height="9" fill="#505050"></rect><path d="M44 -4.5H48Q51 0 48 4.5H44Z" fill="#e87080"></path>
</g>
<!-- books -->
<ellipse cx="50" cy="190" rx="22" ry="4" fill="#c8b898" fill-opacity="0.5"></ellipse>
<path d="M28.3 148L50 144.9L55.5 147V170L34 175L28.3 172Z" fill="#6cc850" stroke="#5a8a40" stroke-width="0.6"></path>
<path d="M28.3 148L34 151V175L28.3 172Z" fill="#e0e8d0"></path>
<rect x="29" y="155" width="5" height="9" fill="#d81818"></rect>
<path d="M26 174.8L52.9 165.6L66.7 176L41.6 192.5Z" fill="#70b8f0" stroke="#3a78b8" stroke-width="0.7"></path>
<path d="M26 174.8V177.5L41.6 195.5L66.7 178.8V176L41.6 192.5Z" fill="#c8c8a0" stroke="#8a8a60" stroke-width="0.5"></path>
<path d="M44 170L58 166.5L60 169L46 173Z" fill="#e02020"></path>
<path d="M28 182L24 190L29 187L32 191L31 182Z" fill="#d01818"></path>
<!-- spindle big -->
<rect x="29.5" y="202.8" width="42.4" height="6.1" fill="#3a3a3a"></rect><rect x="29.5" y="203.3" width="42.4" height="4" fill="url(#gSpin)" opacity="0.7"></rect>
<path d="M33.8 209H67.6V227H65V235.7H36.4V227H33.8Z" fill="url(#gSpin)"></path>
<path d="M33.8 214H67.6M33.8 219H67.6M36.4 229H65" stroke="#6a6a6a" stroke-width="0.8"></path>
<rect x="55" y="210" width="6" height="6" fill="#2a2a2a"></rect>
<circle cx="40" cy="222" r="0.9" fill="#fff"></circle><circle cx="50" cy="222" r="0.9" fill="#fff"></circle><circle cx="60" cy="222" r="0.9" fill="#fff"></circle>
<rect x="47.3" y="235.7" width="6.4" height="20.8" fill="#c8c8c8"></rect>
<path d="M47.3 239L53.7 236M47.3 244L53.7 241M47.3 249L53.7 246M47.3 254L53.7 251" stroke="#505050" stroke-width="1.2"></path>
<!-- rotate mycnc -->
<path d="M40.8 269.5L68.4 281.6L56.3 308.4L28.7 296.3Z" fill="#80c0ff" stroke="#2a5ae0" stroke-width="1"></path>
<path d="M42 310L70 312.5L58 311Z" fill="#c8c0b0" fill-opacity="0.5"></path>
<text x="37" y="291" font-family="Liberation Sans" font-style="italic" font-weight="bold" font-size="6.5" fill="#2a3ab8" transform="rotate(22 48 289)" textLength="20" lengthAdjust="spacingAndGlyphs">myCNC</text>
<path d="M52 267Q40 262 32 273" fill="none" stroke="#1a2ae8" stroke-width="2.2"></path><path d="M29 278L29 270L35 273Z" fill="#1a2ae8"></path>
<path d="M46 314Q60 318 66 304" fill="none" stroke="#1a2ae8" stroke-width="2.2"></path><path d="M69 300L69 308L63 305Z" fill="#1a2ae8"></path>
<!-- tools -->
<path d="M40 337L64 362" stroke="#909090" stroke-width="8.5" stroke-linecap="round"></path>
<path d="M40 337L64 362" stroke="#dcdcdc" stroke-width="6.5" stroke-linecap="round"></path>
<path d="M36.4 332.7m-9.5 0a9.5 9.5 0 1 0 19 0a9.5 9.5 0 1 0 -19 0" fill="#dcdcdc" stroke="#909090" stroke-width="0.8"></path>
<path d="M28 322L36 330L31 335L23 327Z" fill="#ebe3d5"></path>
<path d="M66.7 365.5m-9.5 0a9.5 9.5 0 1 0 19 0a9.5 9.5 0 1 0 -19 0" fill="#dcdcdc" stroke="#909090" stroke-width="0.8"></path>
<path d="M75 376L67 368L72 363L80 371Z" fill="#ebe3d5"></path>
<path d="M49 354L74 333" stroke="#808080" stroke-width="4.5"></path><path d="M49 354L74 333" stroke="#c8c8c8" stroke-width="2.8"></path>
<path d="M71.5 330.5L75.5 327L79.5 331.5L75.5 335Z" fill="#f0f0f0" stroke="#909090" stroke-width="0.7"></path>
<path d="M52 351L44 358Q30 366 25 370Q22 375 27 376Q33 374 46 364L54 357Z" fill="#f4b412" stroke="#c88a00" stroke-width="0.7"></path>
<path d="M46 356L30 368" stroke="#ffe070" stroke-width="1.5"></path>
<!-- chip -->
<g stroke="#a8a8a8" stroke-width="1.6">
<path d="M24 414l-3 6M28 417l-3 6M32 420l-3 6M36 423l-3 6M40 426l-3 6M44 428l-2 6"></path>
<path d="M47 428l2 6M51 424l2 6M55 421l2 6M59 418l2 6M63 415l2 6M67 412l2 6M71 409l2 6M75 405l2 5"></path>
<path d="M27 410l-3-5M31 406l-3-5M35 403l-3-5M39 400l-3-5M43 396l-3-5M47 393l-3-5"></path>
<path d="M54 391l3-5M58 393l3-5M62 395l3-5M66 397l3-5M70 399l3-5M74 401l3-5"></path>
</g>
<path d="M51 390L76 402L43.4 429L22.5 412Z" fill="#3c3c3c" stroke="#222" stroke-width="0.8"></path>
<path d="M51 393L71 402.5L44 425L26.5 412Z" fill="#5a5a5a"></path>
<text x="38" y="414" font-family="Liberation Sans" font-size="5" fill="#9a9a9a" transform="rotate(-38 44 410)">MSP430</text>
<!-- user -->
<path d="M24 493Q24 480 40 477.5H60Q76 480 76 493Z" fill="#1a1a1a"></path><path d="M30 484Q50 480 70 484" stroke="#555" stroke-width="1" fill="none"></path>
<path d="M44 470H56V479Q50 482 44 479Z" fill="#e8b070"></path>
<ellipse cx="50.3" cy="464" rx="10.5" ry="13" fill="#f4c890"></ellipse>
<path d="M39.5 463Q38 450 50 449Q62 450 61 463Q60 455 50 454Q41 455 39.5 463Z" fill="#9a6010"></path>
<!-- mill on plate -->
<path d="M21.7 543.8L45 518.7L78 519.2L59.8 545.5Z" fill="#ecd89a"></path>
<path d="M21.7 543.8L59.8 545.5V550L21.7 548.5Z" fill="#d8c078"></path><path d="M59.8 545.5L78 519.2V523L59.8 550Z" fill="#c8b068"></path>
<path d="M36 535L43 527H56L49 535Z" fill="#fff8e0" stroke="#b8a060" stroke-width="0.6"></path>
<path d="M34.7 515V524Q39.5 526 44.2 524V515Z" fill="url(#gCyl)"></path><ellipse cx="39.5" cy="515" rx="4.8" ry="1.3" fill="#d0d0d0"></ellipse>
<path d="M39 525V535L40 537V525Z" fill="#333"></path>
<!-- motor -->
<path d="M25.2 566L30 563.7H46V602L41 604.4H25.2Z" fill="#d8d8d8" stroke="#909090" stroke-width="0.5"></path>
<path d="M41 566H46V602L41 604.4Z" fill="#a8a8a8"></path>
<rect x="26.5" y="569" width="13" height="5" fill="#6a1010"></rect>
<path d="M27 577H39M27 585H31M27 591H31M27 597H31" stroke="#c04040" stroke-width="0.8"></path>
<path d="M48 583L62 578L76 583V606L64 614Z" fill="#1a1a1a"></path>
<path d="M36.4 584L61 578L65.8 586V613L41 616.5L36.4 610Z" fill="#c8c8c8" stroke="#909090" stroke-width="0.6"></path>
<ellipse cx="50" cy="599" rx="11" ry="11" fill="#e8e8e8" stroke="#303030" stroke-width="1.2"></ellipse>
<path d="M40 606L50 597" stroke="#b0b0b0" stroke-width="7" stroke-linecap="round"></path><circle cx="40" cy="606" r="3.5" fill="#f0f0f0" stroke="#888" stroke-width="0.5"></circle>
<!-- power -->
<circle cx="50" cy="990" r="25.6" fill="url(#gPow)"></circle>
<path d="M43.5 983A10 10 0 1 0 56.5 983" fill="none" stroke="#b01010" stroke-width="3.8" transform="translate(0,1)" opacity="0.6"></path>
<path d="M43.5 983A10 10 0 1 0 56.5 983" fill="none" stroke="#f0f0f0" stroke-width="3.8"></path>
<rect x="47.9" y="976.9" width="4.1" height="14.4" fill="#f0f0f0"></rect>
<!-- rulers -->
<defs><g id="ruler">
 <rect x="4.2" y="36.2" width="51.6" height="16.8" fill="#f8d850" stroke="#c8a848" stroke-width="0.8"></rect>
 <path d="M7 36.5v4M10 36.5v3M13 36.5v3M16 36.5v3M19 36.5v5M22 36.5v3M25 36.5v3M28 36.5v3M31 36.5v5M34 36.5v3M37 36.5v3M40 36.5v3M43 36.5v5M46 36.5v3M49 36.5v3M52 36.5v3" stroke="#8a7a40" stroke-width="0.8"></path>
 <path d="M6 23V36M53.2 23V36" stroke="#111" stroke-width="1"></path>
 <path d="M12 29.7H47" stroke="#000080" stroke-width="1.3"></path>
 <path d="M6.5 29.7L15 26.2V33.2Z M52.7 29.7L44.2 26.2V33.2Z" fill="#000080"></path>
</g></defs>
<use href="#ruler" x="290" y="614"></use><use href="#ruler" x="350" y="614"></use><use href="#ruler" x="410" y="614"></use><use href="#ruler" x="470" y="614"></use><use href="#ruler" x="530" y="614"></use>
<g font-family="Liberation Serif" font-weight="bold" font-style="italic" fill="#000080" font-size="23">
 <text x="299" y="637.3" textLength="41.5" lengthAdjust="spacingAndGlyphs">0.01</text>
 <text x="364.5" y="637.3" textLength="29.5" lengthAdjust="spacingAndGlyphs">0.1</text>
 <text x="425.3" y="637.3" textLength="30.2" lengthAdjust="spacingAndGlyphs">1.0</text>
 <text x="477.5" y="637.3" textLength="44.5" lengthAdjust="spacingAndGlyphs">SET</text>
</g>
<text x="547.5" y="639.5" font-family="Liberation Sans" font-weight="bold" font-size="26" fill="#000080" textLength="24" lengthAdjust="spacingAndGlyphs">∞</text>
<!-- run from here -->
<use href="#spindle" transform="translate(771.2,802.2) scale(1.79,1.75)"></use>
<g class="bt" font-size="16.5" fill="#6ab4ff">
 <text x="751" y="826.8" textLength="32" lengthAdjust="spacingAndGlyphs">Run</text>
 <text x="759" y="843" textLength="37" lengthAdjust="spacingAndGlyphs">from</text>
 <text x="766" y="857.2" textLength="35" lengthAdjust="spacingAndGlyphs">here</text>
</g>
<defs><linearGradient id="gG" x1="0" y1="0" x2="1" y2="1"><stop offset="0" stop-color="#1a3c98"></stop><stop offset="1" stop-color="#6a9ae0"></stop></linearGradient></defs>
<rect x="820.4" y="809.2" width="39.7" height="39.8" rx="5" fill="url(#gG)"></rect>
<rect x="825.5" y="813.5" width="30" height="31.5" rx="3" fill="none" stroke="#e8eef8" stroke-width="1.5"></rect>
<text x="827" y="830.3" font-family="Liberation Sans" font-weight="bold" font-size="20" fill="#f0f0f0" textLength="14.5" lengthAdjust="spacingAndGlyphs">G</text>
<!-- scrollbars -->
<rect x="846.5" y="535" width="12.5" height="78" fill="#f4f2ee"></rect><path d="M846.5 535V613" stroke="#d8d4cc"></path>
<path d="M848 545H857L852.5 540Z M848 603H857L852.5 608Z" fill="#444"></path>
<rect x="846.5" y="675" width="12.5" height="112" fill="#ece8e2"></rect><path d="M846.5 675V787" stroke="#d8d4cc"></path>
<rect x="847" y="686" width="12" height="27" fill="#fbfaf8"></rect>
<path d="M848 685H857L852.5 680Z M848 777H857L852.5 782Z" fill="#444"></path>
</svg>

</body></html>
